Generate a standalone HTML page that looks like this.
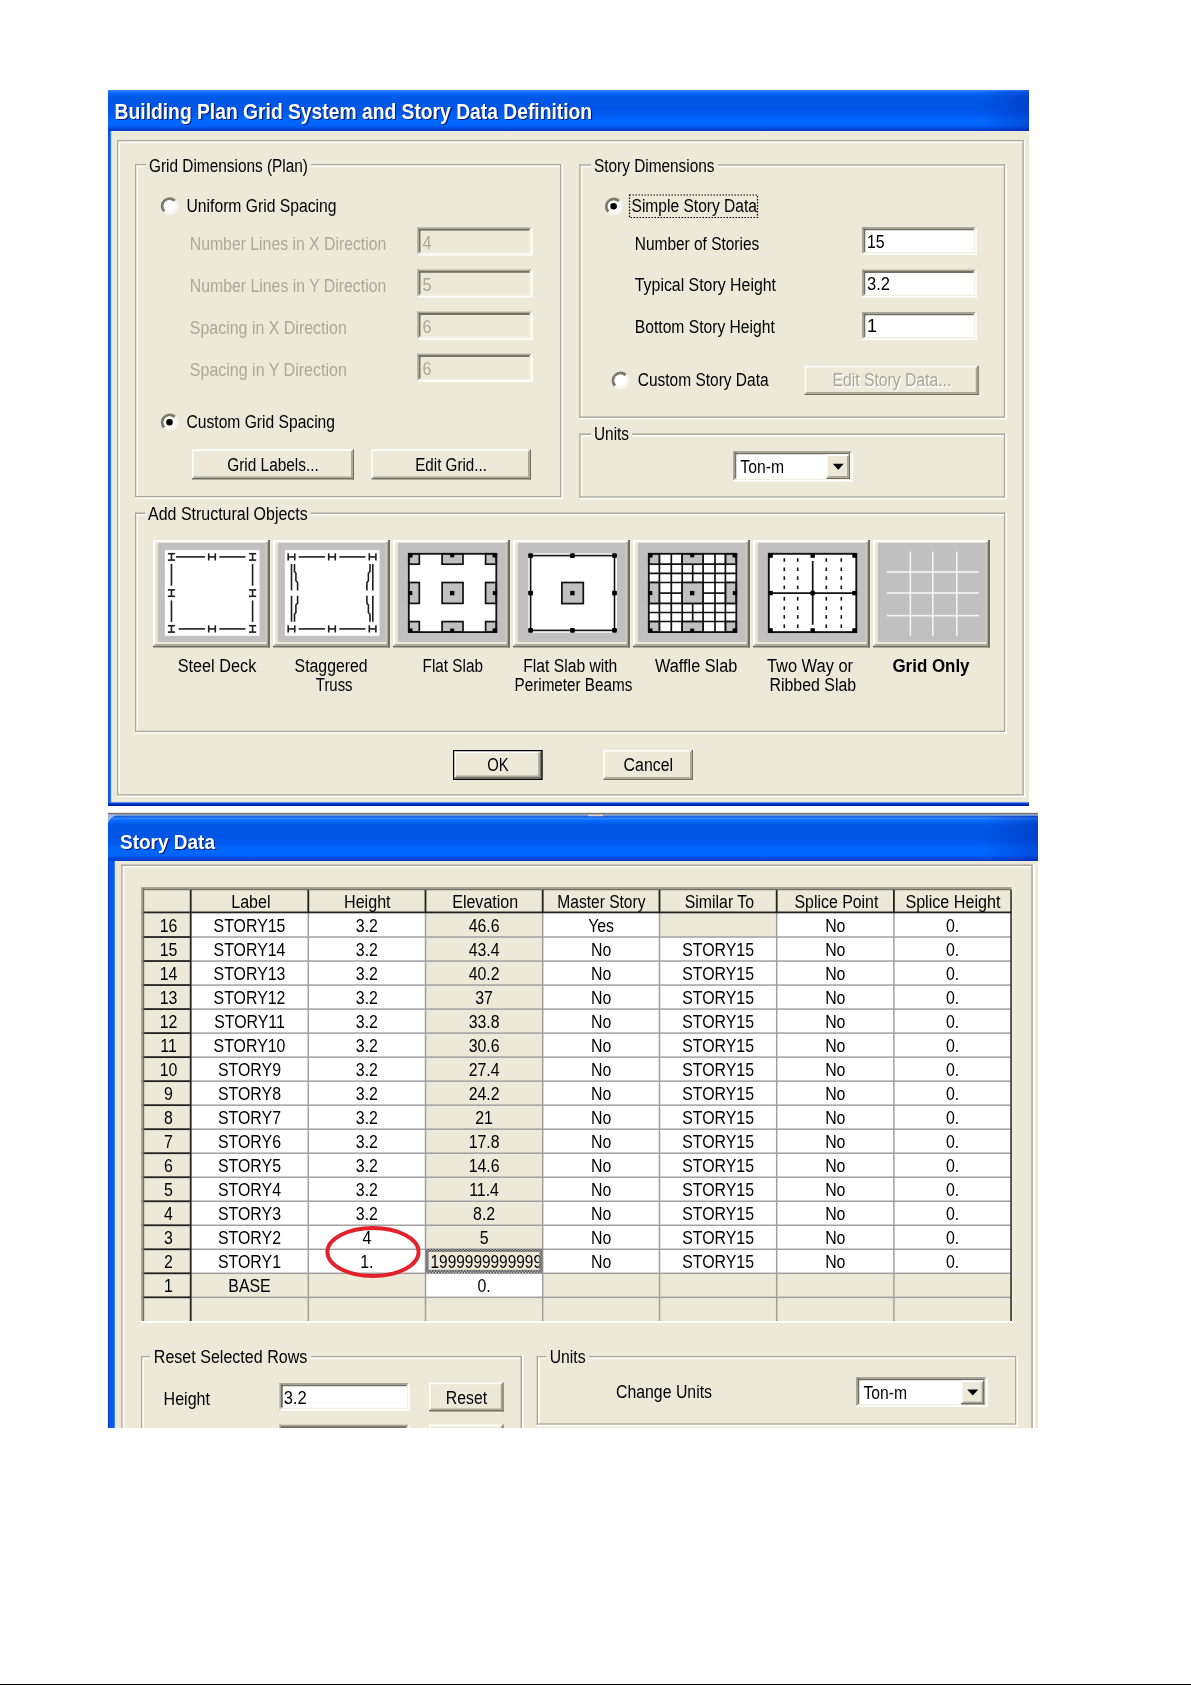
<!DOCTYPE html>
<html><head><meta charset="utf-8"><title>ETABS dialogs</title>
<style>html,body{margin:0;padding:0;background:#fff;width:1191px;height:1685px;overflow:hidden}
svg{display:block;font-family:"Liberation Sans",sans-serif;will-change:transform}</style></head><body>
<svg width="1191" height="1685" viewBox="0 0 1191 1685" font-family="Liberation Sans, sans-serif">
<defs>
<linearGradient id="tb" x1="0" y1="0" x2="0" y2="1">
<stop offset="0" stop-color="#3D95FF"/>
<stop offset="0.05" stop-color="#0A6CFF"/>
<stop offset="0.17" stop-color="#0058E6"/>
<stop offset="0.45" stop-color="#0055E5"/>
<stop offset="0.6" stop-color="#005BF2"/>
<stop offset="0.75" stop-color="#0068FF"/>
<stop offset="0.88" stop-color="#0063FB"/>
<stop offset="0.95" stop-color="#0042D6"/>
<stop offset="1" stop-color="#0040D0"/>
</linearGradient>
<linearGradient id="bb" x1="0" y1="0" x2="0" y2="1">
<stop offset="0" stop-color="#2A6AF5"/>
<stop offset="0.35" stop-color="#0044D8"/>
<stop offset="1" stop-color="#000C8C"/>
</linearGradient>
<linearGradient id="tbr" x1="0" y1="0" x2="1" y2="0">
<stop offset="0" stop-color="#001C9E" stop-opacity="0"/>
<stop offset="1" stop-color="#001C9E" stop-opacity="0.35"/>
</linearGradient>
</defs>
<rect x="0" y="0" width="1191" height="1685" fill="#FFFFFF" />
<rect x="0" y="1684" width="1191" height="1" fill="#000000" />
<rect x="108" y="90" width="921" height="716" fill="#0A55EA" />
<rect x="108" y="802.3" width="921" height="3.6" fill="url(#bb)" />
<rect x="108" y="90" width="921" height="41" fill="url(#tb)" />
<rect x="980" y="90" width="49" height="41" fill="url(#tbr)" />
<rect x="111" y="131" width="918" height="671.3" fill="#ECE9D8" />
<rect x="110.3" y="131" width="0.9" height="671.3" fill="#4F8CF7" />
<text x="115.8" y="120.2" font-size="22" fill="#0A1E7A" text-anchor="start" font-weight="bold" textLength="477.5" lengthAdjust="spacingAndGlyphs" >Building Plan Grid System and Story Data Definition</text>
<text x="114.6" y="119" font-size="22" fill="#FFFFFF" text-anchor="start" font-weight="bold" textLength="477.5" lengthAdjust="spacingAndGlyphs" >Building Plan Grid System and Story Data Definition</text>
<rect x="117" y="140" width="906.9000000000001" height="1.5" fill="#ACA899" />
<rect x="117" y="140" width="1.5" height="655.7" fill="#ACA899" />
<rect x="118.5" y="141.5" width="905.4000000000001" height="1.5" fill="#FFFFFF" />
<rect x="118.5" y="141.5" width="1.5" height="654.2" fill="#FFFFFF" />
<rect x="1022.4000000000001" y="140" width="1.5" height="655.7" fill="#ACA899" />
<rect x="117" y="794.2" width="906.9000000000001" height="1.5" fill="#ACA899" />
<rect x="1023.9000000000001" y="140" width="1.5" height="657.2" fill="#FFFFFF" />
<rect x="117" y="795.7" width="908.4000000000001" height="1.5" fill="#FFFFFF" />
<rect x="135" y="164" width="426.5" height="1.5" fill="#ACA899" />
<rect x="135" y="164" width="1.5" height="333.5" fill="#ACA899" />
<rect x="136.5" y="165.5" width="425" height="1.5" fill="#FFFFFF" />
<rect x="136.5" y="165.5" width="1.5" height="332" fill="#FFFFFF" />
<rect x="560" y="164" width="1.5" height="333.5" fill="#ACA899" />
<rect x="135" y="496" width="426.5" height="1.5" fill="#ACA899" />
<rect x="561.5" y="164" width="1.5" height="335" fill="#FFFFFF" />
<rect x="135" y="497.5" width="428" height="1.5" fill="#FFFFFF" />
<rect x="146" y="162" width="165" height="6" fill="#ECE9D8" />
<text x="149" y="171.5" font-size="18" fill="#000" text-anchor="start" font-weight="normal" textLength="159" lengthAdjust="spacingAndGlyphs" >Grid Dimensions (Plan)</text>
<circle cx="169.5" cy="206" r="9.0" fill="#F7F6F0"/>
<path d="M 163.14 212.36 A 9.0 9.0 0 0 1 175.86 199.64 L 173.67 201.83 A 5.9 5.9 0 0 0 165.33 210.17 Z" fill="#7E7B6F"/>
<circle cx="169.5" cy="206" r="5.9" fill="#FFFFFF"/>
<text x="186.5" y="212" font-size="18" fill="#000" text-anchor="start" font-weight="normal" textLength="150" lengthAdjust="spacingAndGlyphs" >Uniform Grid Spacing</text>
<text x="189.8" y="249.5" font-size="18" fill="#ACA899" text-anchor="start" font-weight="normal" textLength="196.5" lengthAdjust="spacingAndGlyphs" >Number Lines in X Direction</text>
<rect x="417.2" y="227.3" width="115.30000000000001" height="28.0" fill="#FFFFFF" />
<rect x="417.2" y="227.3" width="115.30000000000001" height="1.5" fill="#ACA899" />
<rect x="417.2" y="227.3" width="1.5" height="28.0" fill="#ACA899" />
<rect x="418.7" y="228.8" width="112.30000000000001" height="2" fill="#716F64" />
<rect x="418.7" y="228.8" width="2" height="25.0" fill="#716F64" />
<rect x="531.0" y="227.3" width="1.5" height="28.0" fill="#FFFFFF" />
<rect x="417.2" y="253.8" width="115.30000000000001" height="1.5" fill="#FFFFFF" />
<rect x="529.5" y="228.8" width="1.5" height="25.0" fill="#F1EFE2" />
<rect x="418.7" y="252.3" width="112.30000000000001" height="1.5" fill="#F1EFE2" />
<rect x="420.7" y="230.8" width="108.80000000000001" height="21.5" fill="#ECE9D8" />
<text x="422.5" y="248.5" font-size="18" fill="#ACA899" text-anchor="start" font-weight="normal" textLength="9" lengthAdjust="spacingAndGlyphs" >4</text>
<text x="189.8" y="291.6" font-size="18" fill="#ACA899" text-anchor="start" font-weight="normal" textLength="196.5" lengthAdjust="spacingAndGlyphs" >Number Lines in Y Direction</text>
<rect x="417.2" y="269.40000000000003" width="115.30000000000001" height="28.0" fill="#FFFFFF" />
<rect x="417.2" y="269.40000000000003" width="115.30000000000001" height="1.5" fill="#ACA899" />
<rect x="417.2" y="269.40000000000003" width="1.5" height="28.0" fill="#ACA899" />
<rect x="418.7" y="270.90000000000003" width="112.30000000000001" height="2" fill="#716F64" />
<rect x="418.7" y="270.90000000000003" width="2" height="25.0" fill="#716F64" />
<rect x="531.0" y="269.40000000000003" width="1.5" height="28.0" fill="#FFFFFF" />
<rect x="417.2" y="295.90000000000003" width="115.30000000000001" height="1.5" fill="#FFFFFF" />
<rect x="529.5" y="270.90000000000003" width="1.5" height="25.0" fill="#F1EFE2" />
<rect x="418.7" y="294.40000000000003" width="112.30000000000001" height="1.5" fill="#F1EFE2" />
<rect x="420.7" y="272.90000000000003" width="108.80000000000001" height="21.5" fill="#ECE9D8" />
<text x="422.5" y="290.6" font-size="18" fill="#ACA899" text-anchor="start" font-weight="normal" textLength="9" lengthAdjust="spacingAndGlyphs" >5</text>
<text x="189.8" y="333.7" font-size="18" fill="#ACA899" text-anchor="start" font-weight="normal" textLength="157" lengthAdjust="spacingAndGlyphs" >Spacing in X Direction</text>
<rect x="417.2" y="311.5" width="115.30000000000001" height="28.0" fill="#FFFFFF" />
<rect x="417.2" y="311.5" width="115.30000000000001" height="1.5" fill="#ACA899" />
<rect x="417.2" y="311.5" width="1.5" height="28.0" fill="#ACA899" />
<rect x="418.7" y="313.0" width="112.30000000000001" height="2" fill="#716F64" />
<rect x="418.7" y="313.0" width="2" height="25.0" fill="#716F64" />
<rect x="531.0" y="311.5" width="1.5" height="28.0" fill="#FFFFFF" />
<rect x="417.2" y="338.0" width="115.30000000000001" height="1.5" fill="#FFFFFF" />
<rect x="529.5" y="313.0" width="1.5" height="25.0" fill="#F1EFE2" />
<rect x="418.7" y="336.5" width="112.30000000000001" height="1.5" fill="#F1EFE2" />
<rect x="420.7" y="315.0" width="108.80000000000001" height="21.5" fill="#ECE9D8" />
<text x="422.5" y="332.7" font-size="18" fill="#ACA899" text-anchor="start" font-weight="normal" textLength="9" lengthAdjust="spacingAndGlyphs" >6</text>
<text x="189.8" y="375.8" font-size="18" fill="#ACA899" text-anchor="start" font-weight="normal" textLength="157" lengthAdjust="spacingAndGlyphs" >Spacing in Y Direction</text>
<rect x="417.2" y="353.6" width="115.30000000000001" height="28.0" fill="#FFFFFF" />
<rect x="417.2" y="353.6" width="115.30000000000001" height="1.5" fill="#ACA899" />
<rect x="417.2" y="353.6" width="1.5" height="28.0" fill="#ACA899" />
<rect x="418.7" y="355.1" width="112.30000000000001" height="2" fill="#716F64" />
<rect x="418.7" y="355.1" width="2" height="25.0" fill="#716F64" />
<rect x="531.0" y="353.6" width="1.5" height="28.0" fill="#FFFFFF" />
<rect x="417.2" y="380.1" width="115.30000000000001" height="1.5" fill="#FFFFFF" />
<rect x="529.5" y="355.1" width="1.5" height="25.0" fill="#F1EFE2" />
<rect x="418.7" y="378.6" width="112.30000000000001" height="1.5" fill="#F1EFE2" />
<rect x="420.7" y="357.1" width="108.80000000000001" height="21.5" fill="#ECE9D8" />
<text x="422.5" y="374.8" font-size="18" fill="#ACA899" text-anchor="start" font-weight="normal" textLength="9" lengthAdjust="spacingAndGlyphs" >6</text>
<circle cx="169.5" cy="422.2" r="9.0" fill="#F7F6F0"/>
<path d="M 163.14 428.56 A 9.0 9.0 0 0 1 175.86 415.84 L 173.67 418.03 A 5.9 5.9 0 0 0 165.33 426.37 Z" fill="#7E7B6F"/>
<circle cx="169.5" cy="422.2" r="5.9" fill="#FFFFFF"/>
<circle cx="169.5" cy="422.2" r="3.3" fill="#000"/>
<text x="186.5" y="428" font-size="18" fill="#000" text-anchor="start" font-weight="normal" textLength="148.5" lengthAdjust="spacingAndGlyphs" >Custom Grid Spacing</text>
<rect x="192" y="449.5" width="162" height="30.0" fill="#ECE9D8" />
<rect x="192" y="449.5" width="162" height="1.5" fill="#FFFFFF" />
<rect x="192" y="449.5" width="1.5" height="30.0" fill="#FFFFFF" />
<rect x="352.5" y="449.5" width="1.5" height="30.0" fill="#716F64" />
<rect x="192" y="478.0" width="162" height="1.5" fill="#716F64" />
<rect x="351" y="451.0" width="1.5" height="27.0" fill="#ACA899" />
<rect x="193.5" y="476.5" width="159" height="1.5" fill="#ACA899" />
<text x="227.2" y="471" font-size="18" fill="#000" text-anchor="start" font-weight="normal" textLength="91.6" lengthAdjust="spacingAndGlyphs" >Grid Labels...</text>
<rect x="371.5" y="449.5" width="159.5" height="30.0" fill="#ECE9D8" />
<rect x="371.5" y="449.5" width="159.5" height="1.5" fill="#FFFFFF" />
<rect x="371.5" y="449.5" width="1.5" height="30.0" fill="#FFFFFF" />
<rect x="529.5" y="449.5" width="1.5" height="30.0" fill="#716F64" />
<rect x="371.5" y="478.0" width="159.5" height="1.5" fill="#716F64" />
<rect x="528" y="451.0" width="1.5" height="27.0" fill="#ACA899" />
<rect x="373.0" y="476.5" width="156.5" height="1.5" fill="#ACA899" />
<text x="415.2" y="471" font-size="18" fill="#000" text-anchor="start" font-weight="normal" textLength="71.8" lengthAdjust="spacingAndGlyphs" >Edit Grid...</text>
<rect x="579.3" y="164.3" width="426.0" height="1.5" fill="#ACA899" />
<rect x="579.3" y="164.3" width="1.5" height="253.59999999999997" fill="#ACA899" />
<rect x="580.8" y="165.8" width="424.5" height="1.5" fill="#FFFFFF" />
<rect x="580.8" y="165.8" width="1.5" height="252.09999999999997" fill="#FFFFFF" />
<rect x="1003.8" y="164.3" width="1.5" height="253.59999999999997" fill="#ACA899" />
<rect x="579.3" y="416.4" width="426.0" height="1.5" fill="#ACA899" />
<rect x="1005.3" y="164.3" width="1.5" height="255.09999999999997" fill="#FFFFFF" />
<rect x="579.3" y="417.9" width="427.5" height="1.5" fill="#FFFFFF" />
<rect x="591" y="162.3" width="126.5" height="6" fill="#ECE9D8" />
<text x="594" y="171.5" font-size="18" fill="#000" text-anchor="start" font-weight="normal" textLength="120.5" lengthAdjust="spacingAndGlyphs" >Story Dimensions</text>
<circle cx="613.6" cy="206.3" r="9.0" fill="#F7F6F0"/>
<path d="M 607.24 212.66 A 9.0 9.0 0 0 1 619.96 199.94 L 617.77 202.13 A 5.9 5.9 0 0 0 609.43 210.47 Z" fill="#7E7B6F"/>
<circle cx="613.6" cy="206.3" r="5.9" fill="#FFFFFF"/>
<circle cx="613.6" cy="206.3" r="3.3" fill="#000"/>
<text x="631.5" y="211.6" font-size="18" fill="#000" text-anchor="start" font-weight="normal" textLength="125.5" lengthAdjust="spacingAndGlyphs" >Simple Story Data</text>
<rect x="629.5" y="195" width="128" height="22.5" fill="none" stroke="#000" stroke-width="1.2" stroke-dasharray="1.5 1.5"/>
<text x="634.8" y="249.5" font-size="18" fill="#000" text-anchor="start" font-weight="normal" textLength="124.4" lengthAdjust="spacingAndGlyphs" >Number of Stories</text>
<rect x="862" y="227.0" width="114.70000000000005" height="28.0" fill="#FFFFFF" />
<rect x="862" y="227.0" width="114.70000000000005" height="1.5" fill="#ACA899" />
<rect x="862" y="227.0" width="1.5" height="28.0" fill="#ACA899" />
<rect x="863.5" y="228.5" width="111.70000000000005" height="2" fill="#716F64" />
<rect x="863.5" y="228.5" width="2" height="25.0" fill="#716F64" />
<rect x="975.2" y="227.0" width="1.5" height="28.0" fill="#FFFFFF" />
<rect x="862" y="253.5" width="114.70000000000005" height="1.5" fill="#FFFFFF" />
<rect x="973.7" y="228.5" width="1.5" height="25.0" fill="#F1EFE2" />
<rect x="863.5" y="252.0" width="111.70000000000005" height="1.5" fill="#F1EFE2" />
<rect x="865.5" y="230.5" width="108.20000000000005" height="21.5" fill="#FFFFFF" />
<text x="867" y="247.9" font-size="18" fill="#000" text-anchor="start" font-weight="normal" textLength="17.7" lengthAdjust="spacingAndGlyphs" >15</text>
<text x="634.8" y="291.3" font-size="18" fill="#000" text-anchor="start" font-weight="normal" textLength="141.2" lengthAdjust="spacingAndGlyphs" >Typical Story Height</text>
<rect x="862" y="269.5" width="114.70000000000005" height="28.0" fill="#FFFFFF" />
<rect x="862" y="269.5" width="114.70000000000005" height="1.5" fill="#ACA899" />
<rect x="862" y="269.5" width="1.5" height="28.0" fill="#ACA899" />
<rect x="863.5" y="271.0" width="111.70000000000005" height="2" fill="#716F64" />
<rect x="863.5" y="271.0" width="2" height="25.0" fill="#716F64" />
<rect x="975.2" y="269.5" width="1.5" height="28.0" fill="#FFFFFF" />
<rect x="862" y="296.0" width="114.70000000000005" height="1.5" fill="#FFFFFF" />
<rect x="973.7" y="271.0" width="1.5" height="25.0" fill="#F1EFE2" />
<rect x="863.5" y="294.5" width="111.70000000000005" height="1.5" fill="#F1EFE2" />
<rect x="865.5" y="273.0" width="108.20000000000005" height="21.5" fill="#FFFFFF" />
<text x="867" y="289.7" font-size="18" fill="#000" text-anchor="start" font-weight="normal" textLength="23" lengthAdjust="spacingAndGlyphs" >3.2</text>
<text x="634.8" y="333.1" font-size="18" fill="#000" text-anchor="start" font-weight="normal" textLength="140" lengthAdjust="spacingAndGlyphs" >Bottom Story Height</text>
<rect x="862" y="312.0" width="114.70000000000005" height="28.0" fill="#FFFFFF" />
<rect x="862" y="312.0" width="114.70000000000005" height="1.5" fill="#ACA899" />
<rect x="862" y="312.0" width="1.5" height="28.0" fill="#ACA899" />
<rect x="863.5" y="313.5" width="111.70000000000005" height="2" fill="#716F64" />
<rect x="863.5" y="313.5" width="2" height="25.0" fill="#716F64" />
<rect x="975.2" y="312.0" width="1.5" height="28.0" fill="#FFFFFF" />
<rect x="862" y="338.5" width="114.70000000000005" height="1.5" fill="#FFFFFF" />
<rect x="973.7" y="313.5" width="1.5" height="25.0" fill="#F1EFE2" />
<rect x="863.5" y="337.0" width="111.70000000000005" height="1.5" fill="#F1EFE2" />
<rect x="865.5" y="315.5" width="108.20000000000005" height="21.5" fill="#FFFFFF" />
<text x="867" y="331.5" font-size="18" fill="#000" text-anchor="start" font-weight="normal" >1</text>
<circle cx="620.3" cy="380.3" r="9.0" fill="#F7F6F0"/>
<path d="M 613.94 386.66 A 9.0 9.0 0 0 1 626.66 373.94 L 624.47 376.13 A 5.9 5.9 0 0 0 616.13 384.47 Z" fill="#7E7B6F"/>
<circle cx="620.3" cy="380.3" r="5.9" fill="#FFFFFF"/>
<text x="637.7" y="386.2" font-size="18" fill="#000" text-anchor="start" font-weight="normal" textLength="130.9" lengthAdjust="spacingAndGlyphs" >Custom Story Data</text>
<rect x="804.6" y="365.8" width="174.19999999999993" height="29.19999999999999" fill="#ECE9D8" />
<rect x="804.6" y="365.8" width="174.19999999999993" height="1.5" fill="#FFFFFF" />
<rect x="804.6" y="365.8" width="1.5" height="29.19999999999999" fill="#FFFFFF" />
<rect x="977.3" y="365.8" width="1.5" height="29.19999999999999" fill="#716F64" />
<rect x="804.6" y="393.5" width="174.19999999999993" height="1.5" fill="#716F64" />
<rect x="975.8" y="367.3" width="1.5" height="26.19999999999999" fill="#ACA899" />
<rect x="806.1" y="392" width="171.19999999999993" height="1.5" fill="#ACA899" />
<text x="833.8" y="387.5" font-size="18" fill="#FFFFFF" text-anchor="start" font-weight="normal" textLength="118.8" lengthAdjust="spacingAndGlyphs" >Edit Story Data...</text>
<text x="832.5" y="386.2" font-size="18" fill="#ACA899" text-anchor="start" font-weight="normal" textLength="118.8" lengthAdjust="spacingAndGlyphs" >Edit Story Data...</text>
<rect x="579.3" y="433.5" width="426.0" height="1.5" fill="#ACA899" />
<rect x="579.3" y="433.5" width="1.5" height="64.30000000000001" fill="#ACA899" />
<rect x="580.8" y="435.0" width="424.5" height="1.5" fill="#FFFFFF" />
<rect x="580.8" y="435.0" width="1.5" height="62.80000000000001" fill="#FFFFFF" />
<rect x="1003.8" y="433.5" width="1.5" height="64.30000000000001" fill="#ACA899" />
<rect x="579.3" y="496.3" width="426.0" height="1.5" fill="#ACA899" />
<rect x="1005.3" y="433.5" width="1.5" height="65.80000000000001" fill="#FFFFFF" />
<rect x="579.3" y="497.8" width="427.5" height="1.5" fill="#FFFFFF" />
<rect x="591" y="431.5" width="41" height="6" fill="#ECE9D8" />
<text x="594" y="440" font-size="18" fill="#000" text-anchor="start" font-weight="normal" textLength="35" lengthAdjust="spacingAndGlyphs" >Units</text>
<rect x="733" y="451" width="120" height="30.5" fill="#FFFFFF" />
<rect x="733" y="451" width="120" height="1.5" fill="#ACA899" />
<rect x="733" y="451" width="1.5" height="30.5" fill="#ACA899" />
<rect x="734.5" y="452.5" width="117" height="2" fill="#716F64" />
<rect x="734.5" y="452.5" width="2" height="27.5" fill="#716F64" />
<rect x="851.5" y="451" width="1.5" height="30.5" fill="#FFFFFF" />
<rect x="733" y="480.0" width="120" height="1.5" fill="#FFFFFF" />
<rect x="850" y="452.5" width="1.5" height="27.5" fill="#F1EFE2" />
<rect x="734.5" y="478.5" width="117" height="1.5" fill="#F1EFE2" />
<rect x="736.5" y="454.5" width="113.5" height="24.0" fill="#FFFFFF" />
<rect x="826.5" y="454.5" width="23.5" height="24.5" fill="#ECE9D8" />
<rect x="826.5" y="454.5" width="23.5" height="1.5" fill="#FFFFFF" />
<rect x="826.5" y="454.5" width="1.5" height="24.5" fill="#FFFFFF" />
<rect x="848.5" y="454.5" width="1.5" height="24.5" fill="#716F64" />
<rect x="826.5" y="477.5" width="23.5" height="1.5" fill="#716F64" />
<rect x="847" y="456.0" width="1.5" height="21.5" fill="#ACA899" />
<rect x="828.0" y="476.0" width="20.5" height="1.5" fill="#ACA899" />
<path d="M 832.75 463.75 L 843.75 463.75 L 838.25 469.75 Z" fill="#000"/>
<text x="740.3" y="473.2" font-size="18" fill="#000" text-anchor="start" font-weight="normal" textLength="43.7" lengthAdjust="spacingAndGlyphs" >Ton-m</text>
<rect x="135" y="512.5" width="870.4" height="1.5" fill="#ACA899" />
<rect x="135" y="512.5" width="1.5" height="219.70000000000005" fill="#ACA899" />
<rect x="136.5" y="514.0" width="868.9" height="1.5" fill="#FFFFFF" />
<rect x="136.5" y="514.0" width="1.5" height="218.20000000000005" fill="#FFFFFF" />
<rect x="1003.9" y="512.5" width="1.5" height="219.70000000000005" fill="#ACA899" />
<rect x="135" y="730.7" width="870.4" height="1.5" fill="#ACA899" />
<rect x="1005.4" y="512.5" width="1.5" height="221.20000000000005" fill="#FFFFFF" />
<rect x="135" y="732.2" width="871.9" height="1.5" fill="#FFFFFF" />
<rect x="145.1" y="510.5" width="165.6" height="6" fill="#ECE9D8" />
<text x="148.1" y="519.8" font-size="18" fill="#000" text-anchor="start" font-weight="normal" textLength="159.6" lengthAdjust="spacingAndGlyphs" >Add Structural Objects</text>
<rect x="153" y="540" width="117" height="107.5" fill="#ECE9D8" />
<rect x="153" y="540" width="117" height="1.8" fill="#FFFFFF" />
<rect x="153" y="540" width="1.8" height="107.5" fill="#FFFFFF" />
<rect x="268" y="540" width="2" height="107.5" fill="#716F64" />
<rect x="153" y="645.5" width="117" height="2" fill="#716F64" />
<rect x="266.5" y="541.8" width="1.5" height="103.7" fill="#ACA899" />
<rect x="154.8" y="644.0" width="113.2" height="1.5" fill="#ACA899" />
<rect x="157.8" y="543" width="108" height="99" fill="#C0C0C0" />
<rect x="164.9" y="550.1" width="94.6" height="85.7" fill="#FFFFFF" />
<path d="M 167.86 553.70 L 175.06 553.70" fill="none" stroke="#1E1E1E" stroke-width="1.6" />
<path d="M 167.86 560.10 L 175.06 560.10" fill="none" stroke="#1E1E1E" stroke-width="1.6" />
<path d="M 171.46 553.70 L 171.46 560.10" fill="none" stroke="#1E1E1E" stroke-width="1.6" />
<path d="M 167.86 589.90 L 175.06 589.90" fill="none" stroke="#1E1E1E" stroke-width="1.6" />
<path d="M 167.86 596.30 L 175.06 596.30" fill="none" stroke="#1E1E1E" stroke-width="1.6" />
<path d="M 171.46 589.90 L 171.46 596.30" fill="none" stroke="#1E1E1E" stroke-width="1.6" />
<path d="M 167.86 625.70 L 175.06 625.70" fill="none" stroke="#1E1E1E" stroke-width="1.6" />
<path d="M 167.86 632.10 L 175.06 632.10" fill="none" stroke="#1E1E1E" stroke-width="1.6" />
<path d="M 171.46 625.70 L 171.46 632.10" fill="none" stroke="#1E1E1E" stroke-width="1.6" />
<path d="M 249.00 553.70 L 256.20 553.70" fill="none" stroke="#1E1E1E" stroke-width="1.6" />
<path d="M 249.00 560.10 L 256.20 560.10" fill="none" stroke="#1E1E1E" stroke-width="1.6" />
<path d="M 252.60 553.70 L 252.60 560.10" fill="none" stroke="#1E1E1E" stroke-width="1.6" />
<path d="M 249.00 589.90 L 256.20 589.90" fill="none" stroke="#1E1E1E" stroke-width="1.6" />
<path d="M 249.00 596.30 L 256.20 596.30" fill="none" stroke="#1E1E1E" stroke-width="1.6" />
<path d="M 252.60 589.90 L 252.60 596.30" fill="none" stroke="#1E1E1E" stroke-width="1.6" />
<path d="M 249.00 625.70 L 256.20 625.70" fill="none" stroke="#1E1E1E" stroke-width="1.6" />
<path d="M 249.00 632.10 L 256.20 632.10" fill="none" stroke="#1E1E1E" stroke-width="1.6" />
<path d="M 252.60 625.70 L 252.60 632.10" fill="none" stroke="#1E1E1E" stroke-width="1.6" />
<path d="M 208.70 553.30 L 208.70 560.50" fill="none" stroke="#1E1E1E" stroke-width="1.6" />
<path d="M 215.30 553.30 L 215.30 560.50" fill="none" stroke="#1E1E1E" stroke-width="1.6" />
<path d="M 208.70 556.90 L 215.30 556.90" fill="none" stroke="#1E1E1E" stroke-width="1.6" />
<path d="M 208.70 625.30 L 208.70 632.50" fill="none" stroke="#1E1E1E" stroke-width="1.6" />
<path d="M 215.30 625.30 L 215.30 632.50" fill="none" stroke="#1E1E1E" stroke-width="1.6" />
<path d="M 208.70 628.90 L 215.30 628.90" fill="none" stroke="#1E1E1E" stroke-width="1.6" />
<path d="M 175.90 556.90 L 205.00 556.90" fill="none" stroke="#1E1E1E" stroke-width="1.6" />
<path d="M 219.30 556.90 L 245.50 556.90" fill="none" stroke="#1E1E1E" stroke-width="1.6" />
<path d="M 178.70 628.90 L 205.00 628.90" fill="none" stroke="#1E1E1E" stroke-width="1.6" />
<path d="M 219.30 628.90 L 245.50 628.90" fill="none" stroke="#1E1E1E" stroke-width="1.6" />
<path d="M 171.46 564.00 L 171.46 585.70" fill="none" stroke="#1E1E1E" stroke-width="1.6" />
<path d="M 171.46 600.40 L 171.46 621.90" fill="none" stroke="#1E1E1E" stroke-width="1.6" />
<path d="M 252.60 564.00 L 252.60 585.70" fill="none" stroke="#1E1E1E" stroke-width="1.6" />
<path d="M 252.60 600.40 L 252.60 621.90" fill="none" stroke="#1E1E1E" stroke-width="1.6" />
<rect x="273" y="540" width="117" height="107.5" fill="#ECE9D8" />
<rect x="273" y="540" width="117" height="1.8" fill="#FFFFFF" />
<rect x="273" y="540" width="1.8" height="107.5" fill="#FFFFFF" />
<rect x="388" y="540" width="2" height="107.5" fill="#716F64" />
<rect x="273" y="645.5" width="117" height="2" fill="#716F64" />
<rect x="386.5" y="541.8" width="1.5" height="103.7" fill="#ACA899" />
<rect x="274.8" y="644.0" width="113.2" height="1.5" fill="#ACA899" />
<rect x="277.8" y="543" width="108" height="99" fill="#C0C0C0" />
<rect x="284.9" y="550.1" width="94.6" height="85.7" fill="#FFFFFF" />
<path d="M 288.16 553.30 L 288.16 560.50" fill="none" stroke="#1E1E1E" stroke-width="1.6" />
<path d="M 294.76 553.30 L 294.76 560.50" fill="none" stroke="#1E1E1E" stroke-width="1.6" />
<path d="M 288.16 556.90 L 294.76 556.90" fill="none" stroke="#1E1E1E" stroke-width="1.6" />
<path d="M 288.16 625.30 L 288.16 632.50" fill="none" stroke="#1E1E1E" stroke-width="1.6" />
<path d="M 294.76 625.30 L 294.76 632.50" fill="none" stroke="#1E1E1E" stroke-width="1.6" />
<path d="M 288.16 628.90 L 294.76 628.90" fill="none" stroke="#1E1E1E" stroke-width="1.6" />
<path d="M 328.70 553.30 L 328.70 560.50" fill="none" stroke="#1E1E1E" stroke-width="1.6" />
<path d="M 335.30 553.30 L 335.30 560.50" fill="none" stroke="#1E1E1E" stroke-width="1.6" />
<path d="M 328.70 556.90 L 335.30 556.90" fill="none" stroke="#1E1E1E" stroke-width="1.6" />
<path d="M 328.70 625.30 L 328.70 632.50" fill="none" stroke="#1E1E1E" stroke-width="1.6" />
<path d="M 335.30 625.30 L 335.30 632.50" fill="none" stroke="#1E1E1E" stroke-width="1.6" />
<path d="M 328.70 628.90 L 335.30 628.90" fill="none" stroke="#1E1E1E" stroke-width="1.6" />
<path d="M 369.30 553.30 L 369.30 560.50" fill="none" stroke="#1E1E1E" stroke-width="1.6" />
<path d="M 375.90 553.30 L 375.90 560.50" fill="none" stroke="#1E1E1E" stroke-width="1.6" />
<path d="M 369.30 556.90 L 375.90 556.90" fill="none" stroke="#1E1E1E" stroke-width="1.6" />
<path d="M 369.30 625.30 L 369.30 632.50" fill="none" stroke="#1E1E1E" stroke-width="1.6" />
<path d="M 375.90 625.30 L 375.90 632.50" fill="none" stroke="#1E1E1E" stroke-width="1.6" />
<path d="M 369.30 628.90 L 375.90 628.90" fill="none" stroke="#1E1E1E" stroke-width="1.6" />
<path d="M 298.70 556.90 L 325.00 556.90" fill="none" stroke="#1E1E1E" stroke-width="1.6" />
<path d="M 339.30 556.90 L 365.50 556.90" fill="none" stroke="#1E1E1E" stroke-width="1.6" />
<path d="M 298.70 628.90 L 325.00 628.90" fill="none" stroke="#1E1E1E" stroke-width="1.6" />
<path d="M 339.30 628.90 L 365.50 628.90" fill="none" stroke="#1E1E1E" stroke-width="1.6" />
<path d="M 291.50 564.00 L 291.50 590.40" fill="none" stroke="#1E1E1E" stroke-width="1.6" />
<path d="M 291.50 595.70 L 291.50 621.70" fill="none" stroke="#1E1E1E" stroke-width="1.6" />
<path d="M 294.50 564.00 L 294.50 571.50 L 295.90 573.20 L 295.90 580.70 L 297.60 582.50 L 297.60 590.40" fill="none" stroke="#1E1E1E" stroke-width="1.6" />
<path d="M 297.60 595.70 L 297.60 603.20 L 295.90 605.00 L 295.90 612.50 L 294.50 614.20 L 294.50 621.70" fill="none" stroke="#1E1E1E" stroke-width="1.6" />
<path d="M 372.80 564.00 L 372.80 590.40" fill="none" stroke="#1E1E1E" stroke-width="1.6" />
<path d="M 372.80 595.70 L 372.80 621.70" fill="none" stroke="#1E1E1E" stroke-width="1.6" />
<path d="M 370.00 564.00 L 370.00 571.50 L 368.40 573.20 L 368.40 580.70 L 366.90 582.50 L 366.90 590.40" fill="none" stroke="#1E1E1E" stroke-width="1.6" />
<path d="M 366.90 595.70 L 366.90 603.20 L 368.40 605.00 L 368.40 612.50 L 370.00 614.20 L 370.00 621.70" fill="none" stroke="#1E1E1E" stroke-width="1.6" />
<rect x="393" y="540" width="117" height="107.5" fill="#ECE9D8" />
<rect x="393" y="540" width="117" height="1.8" fill="#FFFFFF" />
<rect x="393" y="540" width="1.8" height="107.5" fill="#FFFFFF" />
<rect x="508" y="540" width="2" height="107.5" fill="#716F64" />
<rect x="393" y="645.5" width="117" height="2" fill="#716F64" />
<rect x="506.5" y="541.8" width="1.5" height="103.7" fill="#ACA899" />
<rect x="394.8" y="644.0" width="113.2" height="1.5" fill="#ACA899" />
<rect x="397.8" y="543" width="108" height="99" fill="#C0C0C0" />
<rect x="408.8" y="553.8" width="87.5" height="78.3" fill="#FFFFFF" />
<rect x="408.80" y="553.80" width="10.50" height="10.40" fill="#C0C0C0" stroke="#111" stroke-width="1.7"/>
<rect x="442.10" y="553.80" width="20.90" height="10.40" fill="#C0C0C0" stroke="#111" stroke-width="1.7"/>
<rect x="485.60" y="553.80" width="10.70" height="10.40" fill="#C0C0C0" stroke="#111" stroke-width="1.7"/>
<rect x="408.80" y="582.50" width="10.50" height="20.90" fill="#C0C0C0" stroke="#111" stroke-width="1.7"/>
<rect x="442.10" y="582.50" width="20.90" height="20.90" fill="#C0C0C0" stroke="#111" stroke-width="1.7"/>
<rect x="485.60" y="582.50" width="10.70" height="20.90" fill="#C0C0C0" stroke="#111" stroke-width="1.7"/>
<rect x="408.80" y="621.60" width="10.50" height="10.50" fill="#C0C0C0" stroke="#111" stroke-width="1.7"/>
<rect x="442.10" y="621.60" width="20.90" height="10.50" fill="#C0C0C0" stroke="#111" stroke-width="1.7"/>
<rect x="485.60" y="621.60" width="10.70" height="10.50" fill="#C0C0C0" stroke="#111" stroke-width="1.7"/>
<rect x="408.80" y="553.80" width="87.5" height="78.3" fill="none" stroke="#111" stroke-width="1.8"/>
<rect x="450.0" y="590.9" width="4.4" height="4.4" fill="#000" />
<rect x="408.5" y="553.5" width="4" height="4" fill="#000" />
<rect x="450.2" y="553.3" width="4" height="4" fill="#000" />
<rect x="492.6" y="553.5" width="4" height="4" fill="#000" />
<rect x="408.3" y="591.1" width="4" height="4" fill="#000" />
<rect x="492.8" y="591.1" width="4" height="4" fill="#000" />
<rect x="408.5" y="628.4" width="4" height="4" fill="#000" />
<rect x="450.2" y="628.6" width="4" height="4" fill="#000" />
<rect x="492.6" y="628.4" width="4" height="4" fill="#000" />
<rect x="513" y="540" width="117" height="107.5" fill="#ECE9D8" />
<rect x="513" y="540" width="117" height="1.8" fill="#FFFFFF" />
<rect x="513" y="540" width="1.8" height="107.5" fill="#FFFFFF" />
<rect x="628" y="540" width="2" height="107.5" fill="#716F64" />
<rect x="513" y="645.5" width="117" height="2" fill="#716F64" />
<rect x="626.5" y="541.8" width="1.5" height="103.7" fill="#ACA899" />
<rect x="514.8" y="644.0" width="113.2" height="1.5" fill="#ACA899" />
<rect x="517.8" y="543" width="108" height="99" fill="#C0C0C0" />
<rect x="528.4" y="553.4" width="88.6" height="79.3" fill="#FFFFFF" />
<rect x="530.60" y="555.60" width="83.9" height="74.8" fill="none" stroke="#111" stroke-width="1.6"/>
<rect x="561.90" y="582.50" width="21.4" height="21.1" fill="#C0C0C0" stroke="#111" stroke-width="1.7"/>
<rect x="570.1999999999999" y="590.9" width="4.4" height="4.4" fill="#000" />
<rect x="528.20" y="553.20" width="4.8" height="4.8" rx="1" fill="#000"/>
<rect x="570.00" y="553.20" width="4.8" height="4.8" rx="1" fill="#000"/>
<rect x="612.10" y="553.20" width="4.8" height="4.8" rx="1" fill="#000"/>
<rect x="528.20" y="590.70" width="4.8" height="4.8" rx="1" fill="#000"/>
<rect x="612.10" y="590.70" width="4.8" height="4.8" rx="1" fill="#000"/>
<rect x="528.20" y="628.00" width="4.8" height="4.8" rx="1" fill="#000"/>
<rect x="570.00" y="628.00" width="4.8" height="4.8" rx="1" fill="#000"/>
<rect x="612.10" y="628.00" width="4.8" height="4.8" rx="1" fill="#000"/>
<rect x="633" y="540" width="117" height="107.5" fill="#ECE9D8" />
<rect x="633" y="540" width="117" height="1.8" fill="#FFFFFF" />
<rect x="633" y="540" width="1.8" height="107.5" fill="#FFFFFF" />
<rect x="748" y="540" width="2" height="107.5" fill="#716F64" />
<rect x="633" y="645.5" width="117" height="2" fill="#716F64" />
<rect x="746.5" y="541.8" width="1.5" height="103.7" fill="#ACA899" />
<rect x="634.8" y="644.0" width="113.2" height="1.5" fill="#ACA899" />
<rect x="637.8" y="543" width="108" height="99" fill="#C0C0C0" />
<rect x="648.8" y="553.8" width="87.5" height="78.3" fill="#FFFFFF" />
<path d="M 659.40 553.80 L 659.40 632.10" fill="none" stroke="#111" stroke-width="1.7" />
<path d="M 671.30 553.80 L 671.30 632.10" fill="none" stroke="#111" stroke-width="1.7" />
<path d="M 682.20 553.80 L 682.20 632.10" fill="none" stroke="#111" stroke-width="1.7" />
<path d="M 692.70 564.20 L 692.70 582.50" fill="none" stroke="#111" stroke-width="1.7" />
<path d="M 692.70 603.40 L 692.70 621.50" fill="none" stroke="#111" stroke-width="1.7" />
<path d="M 703.10 553.80 L 703.10 632.10" fill="none" stroke="#111" stroke-width="1.7" />
<path d="M 715.00 553.80 L 715.00 632.10" fill="none" stroke="#111" stroke-width="1.7" />
<path d="M 725.40 553.80 L 725.40 632.10" fill="none" stroke="#111" stroke-width="1.7" />
<path d="M 648.80 564.20 L 736.30 564.20" fill="none" stroke="#111" stroke-width="1.7" />
<path d="M 648.80 573.40 L 736.30 573.40" fill="none" stroke="#111" stroke-width="1.7" />
<path d="M 648.80 582.50 L 736.30 582.50" fill="none" stroke="#111" stroke-width="1.7" />
<path d="M 659.40 593.10 L 682.20 593.10" fill="none" stroke="#111" stroke-width="1.7" />
<path d="M 703.10 593.10 L 725.40 593.10" fill="none" stroke="#111" stroke-width="1.7" />
<path d="M 648.80 603.40 L 736.30 603.40" fill="none" stroke="#111" stroke-width="1.7" />
<path d="M 648.80 612.50 L 736.30 612.50" fill="none" stroke="#111" stroke-width="1.7" />
<path d="M 648.80 621.50 L 736.30 621.50" fill="none" stroke="#111" stroke-width="1.7" />
<rect x="648.8" y="553.8" width="10.5" height="10.399999999999999" fill="#C0C0C0" />
<rect x="682.1" y="553.8" width="20.9" height="10.399999999999999" fill="#C0C0C0" />
<rect x="725.6" y="553.8" width="10.700000000000003" height="10.399999999999999" fill="#C0C0C0" />
<rect x="648.8" y="582.5" width="10.5" height="20.9" fill="#C0C0C0" />
<rect x="682.1" y="582.5" width="20.9" height="20.9" fill="#C0C0C0" />
<rect x="725.6" y="582.5" width="10.700000000000003" height="20.9" fill="#C0C0C0" />
<rect x="648.8" y="621.6" width="10.5" height="10.5" fill="#C0C0C0" />
<rect x="682.1" y="621.6" width="20.9" height="10.5" fill="#C0C0C0" />
<rect x="725.6" y="621.6" width="10.700000000000003" height="10.5" fill="#C0C0C0" />
<rect x="648.80" y="553.80" width="10.50" height="10.40" fill="none" stroke="#111" stroke-width="1.7"/>
<rect x="682.10" y="553.80" width="20.90" height="10.40" fill="none" stroke="#111" stroke-width="1.7"/>
<rect x="725.60" y="553.80" width="10.70" height="10.40" fill="none" stroke="#111" stroke-width="1.7"/>
<rect x="648.80" y="582.50" width="10.50" height="20.90" fill="none" stroke="#111" stroke-width="1.7"/>
<rect x="682.10" y="582.50" width="20.90" height="20.90" fill="none" stroke="#111" stroke-width="1.7"/>
<rect x="725.60" y="582.50" width="10.70" height="20.90" fill="none" stroke="#111" stroke-width="1.7"/>
<rect x="648.80" y="621.60" width="10.50" height="10.50" fill="none" stroke="#111" stroke-width="1.7"/>
<rect x="682.10" y="621.60" width="20.90" height="10.50" fill="none" stroke="#111" stroke-width="1.7"/>
<rect x="725.60" y="621.60" width="10.70" height="10.50" fill="none" stroke="#111" stroke-width="1.7"/>
<rect x="648.80" y="553.80" width="87.5" height="78.3" fill="none" stroke="#111" stroke-width="1.8"/>
<rect x="690.0" y="590.9" width="4.4" height="4.4" fill="#000" />
<rect x="648.5" y="553.5" width="4" height="4" fill="#000" />
<rect x="690.2" y="553.3" width="4" height="4" fill="#000" />
<rect x="732.6" y="553.5" width="4" height="4" fill="#000" />
<rect x="648.3" y="591.1" width="4" height="4" fill="#000" />
<rect x="732.8" y="591.1" width="4" height="4" fill="#000" />
<rect x="648.5" y="628.4" width="4" height="4" fill="#000" />
<rect x="690.2" y="628.6" width="4" height="4" fill="#000" />
<rect x="732.6" y="628.4" width="4" height="4" fill="#000" />
<rect x="753" y="540" width="117" height="107.5" fill="#ECE9D8" />
<rect x="753" y="540" width="117" height="1.8" fill="#FFFFFF" />
<rect x="753" y="540" width="1.8" height="107.5" fill="#FFFFFF" />
<rect x="868" y="540" width="2" height="107.5" fill="#716F64" />
<rect x="753" y="645.5" width="117" height="2" fill="#716F64" />
<rect x="866.5" y="541.8" width="1.5" height="103.7" fill="#ACA899" />
<rect x="754.8" y="644.0" width="113.2" height="1.5" fill="#ACA899" />
<rect x="757.8" y="543" width="108" height="99" fill="#C0C0C0" />
<rect x="768.8" y="553.8" width="87.5" height="78.3" fill="#FFFFFF" />
<rect x="768.80" y="553.80" width="87.5" height="78.3" fill="none" stroke="#111" stroke-width="1.9"/>
<path d="M 768.80 593.10 L 856.30 593.10" fill="none" stroke="#111" stroke-width="1.7" />
<path d="M 812.70 560.90 L 812.70 624.80" fill="none" stroke="#111" stroke-width="1.7" />
<path d="M 784.30 558.20 L 784.30 561.80" fill="none" stroke="#111" stroke-width="1.6" />
<path d="M 784.30 567.50 L 784.30 571.10" fill="none" stroke="#111" stroke-width="1.6" />
<path d="M 784.30 576.30 L 784.30 579.90" fill="none" stroke="#111" stroke-width="1.6" />
<path d="M 784.30 585.60 L 784.30 589.20" fill="none" stroke="#111" stroke-width="1.6" />
<path d="M 784.30 597.00 L 784.30 600.60" fill="none" stroke="#111" stroke-width="1.6" />
<path d="M 784.30 606.30 L 784.30 609.90" fill="none" stroke="#111" stroke-width="1.6" />
<path d="M 784.30 615.10 L 784.30 618.70" fill="none" stroke="#111" stroke-width="1.6" />
<path d="M 784.30 624.40 L 784.30 628.00" fill="none" stroke="#111" stroke-width="1.6" />
<path d="M 797.70 558.20 L 797.70 561.80" fill="none" stroke="#111" stroke-width="1.6" />
<path d="M 797.70 567.50 L 797.70 571.10" fill="none" stroke="#111" stroke-width="1.6" />
<path d="M 797.70 576.30 L 797.70 579.90" fill="none" stroke="#111" stroke-width="1.6" />
<path d="M 797.70 585.60 L 797.70 589.20" fill="none" stroke="#111" stroke-width="1.6" />
<path d="M 797.70 597.00 L 797.70 600.60" fill="none" stroke="#111" stroke-width="1.6" />
<path d="M 797.70 606.30 L 797.70 609.90" fill="none" stroke="#111" stroke-width="1.6" />
<path d="M 797.70 615.10 L 797.70 618.70" fill="none" stroke="#111" stroke-width="1.6" />
<path d="M 797.70 624.40 L 797.70 628.00" fill="none" stroke="#111" stroke-width="1.6" />
<path d="M 826.30 558.20 L 826.30 561.80" fill="none" stroke="#111" stroke-width="1.6" />
<path d="M 826.30 567.50 L 826.30 571.10" fill="none" stroke="#111" stroke-width="1.6" />
<path d="M 826.30 576.30 L 826.30 579.90" fill="none" stroke="#111" stroke-width="1.6" />
<path d="M 826.30 585.60 L 826.30 589.20" fill="none" stroke="#111" stroke-width="1.6" />
<path d="M 826.30 597.00 L 826.30 600.60" fill="none" stroke="#111" stroke-width="1.6" />
<path d="M 826.30 606.30 L 826.30 609.90" fill="none" stroke="#111" stroke-width="1.6" />
<path d="M 826.30 615.10 L 826.30 618.70" fill="none" stroke="#111" stroke-width="1.6" />
<path d="M 826.30 624.40 L 826.30 628.00" fill="none" stroke="#111" stroke-width="1.6" />
<path d="M 841.30 558.20 L 841.30 561.80" fill="none" stroke="#111" stroke-width="1.6" />
<path d="M 841.30 567.50 L 841.30 571.10" fill="none" stroke="#111" stroke-width="1.6" />
<path d="M 841.30 576.30 L 841.30 579.90" fill="none" stroke="#111" stroke-width="1.6" />
<path d="M 841.30 585.60 L 841.30 589.20" fill="none" stroke="#111" stroke-width="1.6" />
<path d="M 841.30 597.00 L 841.30 600.60" fill="none" stroke="#111" stroke-width="1.6" />
<path d="M 841.30 606.30 L 841.30 609.90" fill="none" stroke="#111" stroke-width="1.6" />
<path d="M 841.30 615.10 L 841.30 618.70" fill="none" stroke="#111" stroke-width="1.6" />
<path d="M 841.30 624.40 L 841.30 628.00" fill="none" stroke="#111" stroke-width="1.6" />
<rect x="768.4" y="553.4" width="4.4" height="4.4" fill="#000" />
<rect x="810.5" y="553.4" width="4.4" height="4.4" fill="#000" />
<rect x="852.3" y="553.4" width="4.4" height="4.4" fill="#000" />
<rect x="768.4" y="590.9" width="4.4" height="4.4" fill="#000" />
<rect x="852.3" y="590.9" width="4.4" height="4.4" fill="#000" />
<rect x="768.4" y="628.1999999999999" width="4.4" height="4.4" fill="#000" />
<rect x="810.5" y="628.1999999999999" width="4.4" height="4.4" fill="#000" />
<rect x="852.3" y="628.1999999999999" width="4.4" height="4.4" fill="#000" />
<circle cx="812.70" cy="593.10" r="2.6" fill="#000"/>
<rect x="873" y="540" width="117" height="107.5" fill="#ECE9D8" />
<rect x="873" y="540" width="117" height="1.8" fill="#FFFFFF" />
<rect x="873" y="540" width="1.8" height="107.5" fill="#FFFFFF" />
<rect x="988" y="540" width="2" height="107.5" fill="#716F64" />
<rect x="873" y="645.5" width="117" height="2" fill="#716F64" />
<rect x="986.5" y="541.8" width="1.5" height="103.7" fill="#ACA899" />
<rect x="874.8" y="644.0" width="113.2" height="1.5" fill="#ACA899" />
<rect x="877.8" y="543" width="108" height="99" fill="#C0C0C0" />
<rect x="909.6" y="551.5" width="1.6" height="84.5" fill="#F4F4F4" />
<rect x="932.0" y="551.5" width="1.6" height="84.5" fill="#F4F4F4" />
<rect x="956.0" y="551.5" width="1.6" height="84.5" fill="#F4F4F4" />
<rect x="887" y="571.2" width="92" height="1.6" fill="#F4F4F4" />
<rect x="887" y="592.2" width="92" height="1.6" fill="#F4F4F4" />
<rect x="887" y="614.8000000000001" width="92" height="1.6" fill="#F4F4F4" />
<text x="217" y="671.6" font-size="18" fill="#000" text-anchor="middle" font-weight="normal" textLength="78.6" lengthAdjust="spacingAndGlyphs" >Steel Deck</text>
<text x="331.1" y="671.6" font-size="18" fill="#000" text-anchor="middle" font-weight="normal" textLength="73" lengthAdjust="spacingAndGlyphs" >Staggered</text>
<text x="334.2" y="690.9" font-size="18" fill="#000" text-anchor="middle" font-weight="normal" textLength="36.7" lengthAdjust="spacingAndGlyphs" >Truss</text>
<text x="452.8" y="671.6" font-size="18" fill="#000" text-anchor="middle" font-weight="normal" textLength="60.4" lengthAdjust="spacingAndGlyphs" >Flat Slab</text>
<text x="570.3" y="671.6" font-size="18" fill="#000" text-anchor="middle" font-weight="normal" textLength="94" lengthAdjust="spacingAndGlyphs" >Flat Slab with</text>
<text x="573.4" y="690.9" font-size="18" fill="#000" text-anchor="middle" font-weight="normal" textLength="117.7" lengthAdjust="spacingAndGlyphs" >Perimeter Beams</text>
<text x="696.2" y="671.6" font-size="18" fill="#000" text-anchor="middle" font-weight="normal" textLength="82.2" lengthAdjust="spacingAndGlyphs" >Waffle Slab</text>
<text x="810" y="671.6" font-size="18" fill="#000" text-anchor="middle" font-weight="normal" textLength="86.1" lengthAdjust="spacingAndGlyphs" >Two Way or</text>
<text x="812.8" y="690.9" font-size="18" fill="#000" text-anchor="middle" font-weight="normal" textLength="86.7" lengthAdjust="spacingAndGlyphs" >Ribbed Slab</text>
<text x="931" y="671.6" font-size="18" fill="#000" text-anchor="middle" font-weight="bold" textLength="77.1" lengthAdjust="spacingAndGlyphs" >Grid Only</text>
<rect x="453" y="750" width="89.70000000000005" height="30" fill="#ECE9D8" />
<rect x="453" y="750" width="89.70000000000005" height="30" fill="#000" />
<rect x="454.5" y="751.5" width="86.70000000000005" height="27.0" fill="#ECE9D8" />
<rect x="454.5" y="751.5" width="86.70000000000005" height="1.5" fill="#FFFFFF" />
<rect x="454.5" y="751.5" width="1.5" height="27.0" fill="#FFFFFF" />
<rect x="539.7" y="751.5" width="1.5" height="27.0" fill="#716F64" />
<rect x="454.5" y="777.0" width="86.70000000000005" height="1.5" fill="#716F64" />
<rect x="538.2" y="753.0" width="1.5" height="24.0" fill="#ACA899" />
<rect x="456.0" y="775.5" width="83.70000000000005" height="1.5" fill="#ACA899" />
<text x="497.9" y="770.6" font-size="18" fill="#000" text-anchor="middle" font-weight="normal" textLength="21.4" lengthAdjust="spacingAndGlyphs" >OK</text>
<rect x="603.4" y="750" width="89.60000000000002" height="30" fill="#ECE9D8" />
<rect x="603.4" y="750" width="89.60000000000002" height="1.5" fill="#FFFFFF" />
<rect x="603.4" y="750" width="1.5" height="30" fill="#FFFFFF" />
<rect x="691.5" y="750" width="1.5" height="30" fill="#716F64" />
<rect x="603.4" y="778.5" width="89.60000000000002" height="1.5" fill="#716F64" />
<rect x="690" y="751.5" width="1.5" height="27" fill="#ACA899" />
<rect x="604.9" y="777" width="86.60000000000002" height="1.5" fill="#ACA899" />
<text x="648.3" y="770.6" font-size="18" fill="#000" text-anchor="middle" font-weight="normal" textLength="49.4" lengthAdjust="spacingAndGlyphs" >Cancel</text>
<rect x="108" y="812.8" width="930" height="1.9" fill="#7A786A" />
<rect x="108" y="814.7" width="930" height="1.2" fill="#6A96E4" />
<rect x="108" y="815.9" width="930" height="2.2" fill="#1A62E4" />
<rect x="108" y="817.8" width="930" height="43.2" fill="url(#tb)" />
<rect x="985" y="815.9" width="53" height="45.1" fill="url(#tbr)" />
<rect x="588.2" y="814.6" width="14.8" height="1.6" fill="#D8D2C0" />
<path d="M108 814.7 L117 814.7 Q110 817 108 823 Z" fill="#A8B8E4"/>
<rect x="108" y="861" width="7" height="567" fill="#0A58F2" />
<rect x="108" y="861" width="1.0" height="567" fill="#0038C0" />
<rect x="114" y="861" width="1.0" height="567" fill="#3C80F8" />
<rect x="115" y="861" width="923" height="567" fill="#ECE9D8" />
<text x="121.2" y="850.2" font-size="21" fill="#0A1E7A" text-anchor="start" font-weight="bold" textLength="95" lengthAdjust="spacingAndGlyphs" >Story Data</text>
<text x="120" y="849" font-size="21" fill="#FFFFFF" text-anchor="start" font-weight="bold" textLength="95" lengthAdjust="spacingAndGlyphs" >Story Data</text>
<rect x="121.3" y="864.5" width="910.5" height="1.5" fill="#ACA899" />
<rect x="121.3" y="864.5" width="1.5" height="564" fill="#ACA899" />
<rect x="122.8" y="866" width="908.5" height="1.5" fill="#FFFFFF" />
<rect x="122.8" y="866" width="1.5" height="562" fill="#FFFFFF" />
<rect x="1031.3" y="864.5" width="1.6" height="564" fill="#ACA899" />
<rect x="1032.9" y="864.5" width="2" height="564" fill="#FFFFFF" />
<rect x="141" y="887" width="872" height="436" fill="#ECE9D8" />
<rect x="190.7" y="913.0" width="117.60000000000002" height="24.02" fill="#FFFFFF" />
<rect x="308.3" y="913.0" width="117.19999999999999" height="24.02" fill="#FFFFFF" />
<rect x="542.7" y="913.0" width="116.79999999999995" height="24.02" fill="#FFFFFF" />
<rect x="776.7" y="913.0" width="117.19999999999993" height="24.02" fill="#FFFFFF" />
<rect x="893.9" y="913.0" width="117.39999999999998" height="24.02" fill="#FFFFFF" />
<rect x="190.7" y="937.02" width="117.60000000000002" height="24.02" fill="#FFFFFF" />
<rect x="308.3" y="937.02" width="117.19999999999999" height="24.02" fill="#FFFFFF" />
<rect x="542.7" y="937.02" width="116.79999999999995" height="24.02" fill="#FFFFFF" />
<rect x="659.5" y="937.02" width="117.20000000000005" height="24.02" fill="#FFFFFF" />
<rect x="776.7" y="937.02" width="117.19999999999993" height="24.02" fill="#FFFFFF" />
<rect x="893.9" y="937.02" width="117.39999999999998" height="24.02" fill="#FFFFFF" />
<rect x="190.7" y="961.04" width="117.60000000000002" height="24.02" fill="#FFFFFF" />
<rect x="308.3" y="961.04" width="117.19999999999999" height="24.02" fill="#FFFFFF" />
<rect x="542.7" y="961.04" width="116.79999999999995" height="24.02" fill="#FFFFFF" />
<rect x="659.5" y="961.04" width="117.20000000000005" height="24.02" fill="#FFFFFF" />
<rect x="776.7" y="961.04" width="117.19999999999993" height="24.02" fill="#FFFFFF" />
<rect x="893.9" y="961.04" width="117.39999999999998" height="24.02" fill="#FFFFFF" />
<rect x="190.7" y="985.06" width="117.60000000000002" height="24.02" fill="#FFFFFF" />
<rect x="308.3" y="985.06" width="117.19999999999999" height="24.02" fill="#FFFFFF" />
<rect x="542.7" y="985.06" width="116.79999999999995" height="24.02" fill="#FFFFFF" />
<rect x="659.5" y="985.06" width="117.20000000000005" height="24.02" fill="#FFFFFF" />
<rect x="776.7" y="985.06" width="117.19999999999993" height="24.02" fill="#FFFFFF" />
<rect x="893.9" y="985.06" width="117.39999999999998" height="24.02" fill="#FFFFFF" />
<rect x="190.7" y="1009.08" width="117.60000000000002" height="24.02" fill="#FFFFFF" />
<rect x="308.3" y="1009.08" width="117.19999999999999" height="24.02" fill="#FFFFFF" />
<rect x="542.7" y="1009.08" width="116.79999999999995" height="24.02" fill="#FFFFFF" />
<rect x="659.5" y="1009.08" width="117.20000000000005" height="24.02" fill="#FFFFFF" />
<rect x="776.7" y="1009.08" width="117.19999999999993" height="24.02" fill="#FFFFFF" />
<rect x="893.9" y="1009.08" width="117.39999999999998" height="24.02" fill="#FFFFFF" />
<rect x="190.7" y="1033.1" width="117.60000000000002" height="24.02" fill="#FFFFFF" />
<rect x="308.3" y="1033.1" width="117.19999999999999" height="24.02" fill="#FFFFFF" />
<rect x="542.7" y="1033.1" width="116.79999999999995" height="24.02" fill="#FFFFFF" />
<rect x="659.5" y="1033.1" width="117.20000000000005" height="24.02" fill="#FFFFFF" />
<rect x="776.7" y="1033.1" width="117.19999999999993" height="24.02" fill="#FFFFFF" />
<rect x="893.9" y="1033.1" width="117.39999999999998" height="24.02" fill="#FFFFFF" />
<rect x="190.7" y="1057.12" width="117.60000000000002" height="24.02" fill="#FFFFFF" />
<rect x="308.3" y="1057.12" width="117.19999999999999" height="24.02" fill="#FFFFFF" />
<rect x="542.7" y="1057.12" width="116.79999999999995" height="24.02" fill="#FFFFFF" />
<rect x="659.5" y="1057.12" width="117.20000000000005" height="24.02" fill="#FFFFFF" />
<rect x="776.7" y="1057.12" width="117.19999999999993" height="24.02" fill="#FFFFFF" />
<rect x="893.9" y="1057.12" width="117.39999999999998" height="24.02" fill="#FFFFFF" />
<rect x="190.7" y="1081.1399999999999" width="117.60000000000002" height="24.02" fill="#FFFFFF" />
<rect x="308.3" y="1081.1399999999999" width="117.19999999999999" height="24.02" fill="#FFFFFF" />
<rect x="542.7" y="1081.1399999999999" width="116.79999999999995" height="24.02" fill="#FFFFFF" />
<rect x="659.5" y="1081.1399999999999" width="117.20000000000005" height="24.02" fill="#FFFFFF" />
<rect x="776.7" y="1081.1399999999999" width="117.19999999999993" height="24.02" fill="#FFFFFF" />
<rect x="893.9" y="1081.1399999999999" width="117.39999999999998" height="24.02" fill="#FFFFFF" />
<rect x="190.7" y="1105.16" width="117.60000000000002" height="24.02" fill="#FFFFFF" />
<rect x="308.3" y="1105.16" width="117.19999999999999" height="24.02" fill="#FFFFFF" />
<rect x="542.7" y="1105.16" width="116.79999999999995" height="24.02" fill="#FFFFFF" />
<rect x="659.5" y="1105.16" width="117.20000000000005" height="24.02" fill="#FFFFFF" />
<rect x="776.7" y="1105.16" width="117.19999999999993" height="24.02" fill="#FFFFFF" />
<rect x="893.9" y="1105.16" width="117.39999999999998" height="24.02" fill="#FFFFFF" />
<rect x="190.7" y="1129.18" width="117.60000000000002" height="24.02" fill="#FFFFFF" />
<rect x="308.3" y="1129.18" width="117.19999999999999" height="24.02" fill="#FFFFFF" />
<rect x="542.7" y="1129.18" width="116.79999999999995" height="24.02" fill="#FFFFFF" />
<rect x="659.5" y="1129.18" width="117.20000000000005" height="24.02" fill="#FFFFFF" />
<rect x="776.7" y="1129.18" width="117.19999999999993" height="24.02" fill="#FFFFFF" />
<rect x="893.9" y="1129.18" width="117.39999999999998" height="24.02" fill="#FFFFFF" />
<rect x="190.7" y="1153.2" width="117.60000000000002" height="24.02" fill="#FFFFFF" />
<rect x="308.3" y="1153.2" width="117.19999999999999" height="24.02" fill="#FFFFFF" />
<rect x="542.7" y="1153.2" width="116.79999999999995" height="24.02" fill="#FFFFFF" />
<rect x="659.5" y="1153.2" width="117.20000000000005" height="24.02" fill="#FFFFFF" />
<rect x="776.7" y="1153.2" width="117.19999999999993" height="24.02" fill="#FFFFFF" />
<rect x="893.9" y="1153.2" width="117.39999999999998" height="24.02" fill="#FFFFFF" />
<rect x="190.7" y="1177.22" width="117.60000000000002" height="24.02" fill="#FFFFFF" />
<rect x="308.3" y="1177.22" width="117.19999999999999" height="24.02" fill="#FFFFFF" />
<rect x="542.7" y="1177.22" width="116.79999999999995" height="24.02" fill="#FFFFFF" />
<rect x="659.5" y="1177.22" width="117.20000000000005" height="24.02" fill="#FFFFFF" />
<rect x="776.7" y="1177.22" width="117.19999999999993" height="24.02" fill="#FFFFFF" />
<rect x="893.9" y="1177.22" width="117.39999999999998" height="24.02" fill="#FFFFFF" />
<rect x="190.7" y="1201.24" width="117.60000000000002" height="24.02" fill="#FFFFFF" />
<rect x="308.3" y="1201.24" width="117.19999999999999" height="24.02" fill="#FFFFFF" />
<rect x="542.7" y="1201.24" width="116.79999999999995" height="24.02" fill="#FFFFFF" />
<rect x="659.5" y="1201.24" width="117.20000000000005" height="24.02" fill="#FFFFFF" />
<rect x="776.7" y="1201.24" width="117.19999999999993" height="24.02" fill="#FFFFFF" />
<rect x="893.9" y="1201.24" width="117.39999999999998" height="24.02" fill="#FFFFFF" />
<rect x="190.7" y="1225.26" width="117.60000000000002" height="24.02" fill="#FFFFFF" />
<rect x="308.3" y="1225.26" width="117.19999999999999" height="24.02" fill="#FFFFFF" />
<rect x="542.7" y="1225.26" width="116.79999999999995" height="24.02" fill="#FFFFFF" />
<rect x="659.5" y="1225.26" width="117.20000000000005" height="24.02" fill="#FFFFFF" />
<rect x="776.7" y="1225.26" width="117.19999999999993" height="24.02" fill="#FFFFFF" />
<rect x="893.9" y="1225.26" width="117.39999999999998" height="24.02" fill="#FFFFFF" />
<rect x="190.7" y="1249.28" width="117.60000000000002" height="24.02" fill="#FFFFFF" />
<rect x="308.3" y="1249.28" width="117.19999999999999" height="24.02" fill="#FFFFFF" />
<rect x="542.7" y="1249.28" width="116.79999999999995" height="24.02" fill="#FFFFFF" />
<rect x="659.5" y="1249.28" width="117.20000000000005" height="24.02" fill="#FFFFFF" />
<rect x="776.7" y="1249.28" width="117.19999999999993" height="24.02" fill="#FFFFFF" />
<rect x="893.9" y="1249.28" width="117.39999999999998" height="24.02" fill="#FFFFFF" />
<rect x="425.5" y="1273.3" width="117.20000000000005" height="24.02" fill="#FFFFFF" />
<rect x="190.7" y="936.27" width="820.5999999999999" height="1.5" fill="#A0A0A0" />
<rect x="190.7" y="960.29" width="820.5999999999999" height="1.5" fill="#A0A0A0" />
<rect x="190.7" y="984.31" width="820.5999999999999" height="1.5" fill="#A0A0A0" />
<rect x="190.7" y="1008.33" width="820.5999999999999" height="1.5" fill="#A0A0A0" />
<rect x="190.7" y="1032.35" width="820.5999999999999" height="1.5" fill="#A0A0A0" />
<rect x="190.7" y="1056.37" width="820.5999999999999" height="1.5" fill="#A0A0A0" />
<rect x="190.7" y="1080.3899999999999" width="820.5999999999999" height="1.5" fill="#A0A0A0" />
<rect x="190.7" y="1104.41" width="820.5999999999999" height="1.5" fill="#A0A0A0" />
<rect x="190.7" y="1128.43" width="820.5999999999999" height="1.5" fill="#A0A0A0" />
<rect x="190.7" y="1152.45" width="820.5999999999999" height="1.5" fill="#A0A0A0" />
<rect x="190.7" y="1176.47" width="820.5999999999999" height="1.5" fill="#A0A0A0" />
<rect x="190.7" y="1200.49" width="820.5999999999999" height="1.5" fill="#A0A0A0" />
<rect x="190.7" y="1224.51" width="820.5999999999999" height="1.5" fill="#A0A0A0" />
<rect x="190.7" y="1248.53" width="820.5999999999999" height="1.5" fill="#A0A0A0" />
<rect x="190.7" y="1272.55" width="820.5999999999999" height="1.5" fill="#A0A0A0" />
<rect x="190.7" y="1296.57" width="820.5999999999999" height="1.5" fill="#A0A0A0" />
<rect x="307.55" y="913" width="1.5" height="408" fill="#A0A0A0" />
<rect x="424.75" y="913" width="1.5" height="408" fill="#A0A0A0" />
<rect x="541.95" y="913" width="1.5" height="408" fill="#A0A0A0" />
<rect x="658.75" y="913" width="1.5" height="408" fill="#A0A0A0" />
<rect x="775.95" y="913" width="1.5" height="408" fill="#A0A0A0" />
<rect x="893.15" y="913" width="1.5" height="408" fill="#A0A0A0" />
<rect x="142" y="936.12" width="48.69999999999999" height="1.8" fill="#222" />
<rect x="142" y="960.14" width="48.69999999999999" height="1.8" fill="#222" />
<rect x="142" y="984.16" width="48.69999999999999" height="1.8" fill="#222" />
<rect x="142" y="1008.1800000000001" width="48.69999999999999" height="1.8" fill="#222" />
<rect x="142" y="1032.1999999999998" width="48.69999999999999" height="1.8" fill="#222" />
<rect x="142" y="1056.2199999999998" width="48.69999999999999" height="1.8" fill="#222" />
<rect x="142" y="1080.2399999999998" width="48.69999999999999" height="1.8" fill="#222" />
<rect x="142" y="1104.26" width="48.69999999999999" height="1.8" fill="#222" />
<rect x="142" y="1128.28" width="48.69999999999999" height="1.8" fill="#222" />
<rect x="142" y="1152.3" width="48.69999999999999" height="1.8" fill="#222" />
<rect x="142" y="1176.32" width="48.69999999999999" height="1.8" fill="#222" />
<rect x="142" y="1200.34" width="48.69999999999999" height="1.8" fill="#222" />
<rect x="142" y="1224.36" width="48.69999999999999" height="1.8" fill="#222" />
<rect x="142" y="1248.3799999999999" width="48.69999999999999" height="1.8" fill="#222" />
<rect x="142" y="1272.3999999999999" width="48.69999999999999" height="1.8" fill="#222" />
<rect x="142" y="1296.4199999999998" width="48.69999999999999" height="1.8" fill="#222" />
<rect x="189.79999999999998" y="890" width="1.8" height="431" fill="#222" />
<rect x="307.40000000000003" y="890" width="1.8" height="23" fill="#222" />
<rect x="424.6" y="890" width="1.8" height="23" fill="#222" />
<rect x="541.8000000000001" y="890" width="1.8" height="23" fill="#222" />
<rect x="658.6" y="890" width="1.8" height="23" fill="#222" />
<rect x="775.8000000000001" y="890" width="1.8" height="23" fill="#222" />
<rect x="893.0" y="890" width="1.8" height="23" fill="#222" />
<rect x="142" y="911.5" width="869.3" height="1.8" fill="#222" />
<rect x="1010.3" y="890" width="2" height="431" fill="#222" />
<rect x="141" y="887" width="871" height="1.6" fill="#ACA899" />
<rect x="141" y="887" width="1.6" height="435" fill="#ACA899" />
<rect x="142.6" y="888.6" width="869" height="1.6" fill="#716F64" />
<rect x="142.6" y="888.6" width="1.6" height="433" fill="#716F64" />
<rect x="1011.8" y="887" width="1.8" height="436" fill="#F1EFE2" />
<rect x="141" y="1321" width="872" height="2" fill="#FFFFFF" />
<defs><pattern id="chk" width="2.9" height="2.9" patternUnits="userSpaceOnUse"><rect width="2.9" height="2.9" fill="#D8D6CC"/><rect width="1.45" height="1.45" fill="#202030"/><rect x="1.45" y="1.45" width="1.45" height="1.45" fill="#202030"/></pattern>
<clipPath id="selclip"><rect x="428" y="1252" width="111.5" height="19"/></clipPath></defs>
<rect x="425.5" y="1248.78" width="117" height="24.02" fill="url(#chk)" />
<rect x="428.6" y="1251.8799999999999" width="110.8" height="18.02" fill="#ECE9D8" />
<g clip-path="url(#selclip)">
<text x="430.5" y="1268.28" font-size="18" fill="#000" text-anchor="start" font-weight="normal" textLength="111.5" lengthAdjust="spacingAndGlyphs" >1999999999999</text>
</g>
<text x="250.9" y="908.2" font-size="18" fill="#000" text-anchor="middle" font-weight="normal" textLength="39.3" lengthAdjust="spacingAndGlyphs" >Label</text>
<text x="367.3" y="908.2" font-size="18" fill="#000" text-anchor="middle" font-weight="normal" textLength="46.6" lengthAdjust="spacingAndGlyphs" >Height</text>
<text x="485.2" y="908.2" font-size="18" fill="#000" text-anchor="middle" font-weight="normal" textLength="66" lengthAdjust="spacingAndGlyphs" >Elevation</text>
<text x="601.4" y="908.2" font-size="18" fill="#000" text-anchor="middle" font-weight="normal" textLength="88.1" lengthAdjust="spacingAndGlyphs" >Master Story</text>
<text x="719.4" y="908.2" font-size="18" fill="#000" text-anchor="middle" font-weight="normal" textLength="69.2" lengthAdjust="spacingAndGlyphs" >Similar To</text>
<text x="836.4" y="908.2" font-size="18" fill="#000" text-anchor="middle" font-weight="normal" textLength="83.8" lengthAdjust="spacingAndGlyphs" >Splice Point</text>
<text x="952.9" y="908.2" font-size="18" fill="#000" text-anchor="middle" font-weight="normal" textLength="95" lengthAdjust="spacingAndGlyphs" >Splice Height</text>
<text x="168.5" y="932.1" font-size="18" fill="#000" text-anchor="middle" font-weight="normal" textLength="17.68" lengthAdjust="spacingAndGlyphs" >16</text>
<text x="249.5" y="932.1" font-size="18" fill="#000" text-anchor="middle" font-weight="normal" textLength="71.86" lengthAdjust="spacingAndGlyphs" >STORY15</text>
<text x="366.9" y="932.1" font-size="18" fill="#000" text-anchor="middle" font-weight="normal" textLength="22.09" lengthAdjust="spacingAndGlyphs" >3.2</text>
<text x="484.1" y="932.1" font-size="18" fill="#000" text-anchor="middle" font-weight="normal" textLength="30.93" lengthAdjust="spacingAndGlyphs" >46.6</text>
<text x="601.1" y="932.1" font-size="18" fill="#000" text-anchor="middle" font-weight="normal" textLength="25.93" lengthAdjust="spacingAndGlyphs" >Yes</text>
<text x="835.3" y="932.1" font-size="18" fill="#000" text-anchor="middle" font-weight="normal" textLength="20.32" lengthAdjust="spacingAndGlyphs" >No</text>
<text x="952.5999999999999" y="932.1" font-size="18" fill="#000" text-anchor="middle" font-weight="normal" textLength="13.25" lengthAdjust="spacingAndGlyphs" >0.</text>
<text x="168.5" y="956.12" font-size="18" fill="#000" text-anchor="middle" font-weight="normal" textLength="17.68" lengthAdjust="spacingAndGlyphs" >15</text>
<text x="249.5" y="956.12" font-size="18" fill="#000" text-anchor="middle" font-weight="normal" textLength="71.86" lengthAdjust="spacingAndGlyphs" >STORY14</text>
<text x="366.9" y="956.12" font-size="18" fill="#000" text-anchor="middle" font-weight="normal" textLength="22.09" lengthAdjust="spacingAndGlyphs" >3.2</text>
<text x="484.1" y="956.12" font-size="18" fill="#000" text-anchor="middle" font-weight="normal" textLength="30.93" lengthAdjust="spacingAndGlyphs" >43.4</text>
<text x="601.1" y="956.12" font-size="18" fill="#000" text-anchor="middle" font-weight="normal" textLength="20.32" lengthAdjust="spacingAndGlyphs" >No</text>
<text x="718.1" y="956.12" font-size="18" fill="#000" text-anchor="middle" font-weight="normal" textLength="71.86" lengthAdjust="spacingAndGlyphs" >STORY15</text>
<text x="835.3" y="956.12" font-size="18" fill="#000" text-anchor="middle" font-weight="normal" textLength="20.32" lengthAdjust="spacingAndGlyphs" >No</text>
<text x="952.5999999999999" y="956.12" font-size="18" fill="#000" text-anchor="middle" font-weight="normal" textLength="13.25" lengthAdjust="spacingAndGlyphs" >0.</text>
<text x="168.5" y="980.14" font-size="18" fill="#000" text-anchor="middle" font-weight="normal" textLength="17.68" lengthAdjust="spacingAndGlyphs" >14</text>
<text x="249.5" y="980.14" font-size="18" fill="#000" text-anchor="middle" font-weight="normal" textLength="71.86" lengthAdjust="spacingAndGlyphs" >STORY13</text>
<text x="366.9" y="980.14" font-size="18" fill="#000" text-anchor="middle" font-weight="normal" textLength="22.09" lengthAdjust="spacingAndGlyphs" >3.2</text>
<text x="484.1" y="980.14" font-size="18" fill="#000" text-anchor="middle" font-weight="normal" textLength="30.93" lengthAdjust="spacingAndGlyphs" >40.2</text>
<text x="601.1" y="980.14" font-size="18" fill="#000" text-anchor="middle" font-weight="normal" textLength="20.32" lengthAdjust="spacingAndGlyphs" >No</text>
<text x="718.1" y="980.14" font-size="18" fill="#000" text-anchor="middle" font-weight="normal" textLength="71.86" lengthAdjust="spacingAndGlyphs" >STORY15</text>
<text x="835.3" y="980.14" font-size="18" fill="#000" text-anchor="middle" font-weight="normal" textLength="20.32" lengthAdjust="spacingAndGlyphs" >No</text>
<text x="952.5999999999999" y="980.14" font-size="18" fill="#000" text-anchor="middle" font-weight="normal" textLength="13.25" lengthAdjust="spacingAndGlyphs" >0.</text>
<text x="168.5" y="1004.16" font-size="18" fill="#000" text-anchor="middle" font-weight="normal" textLength="17.68" lengthAdjust="spacingAndGlyphs" >13</text>
<text x="249.5" y="1004.16" font-size="18" fill="#000" text-anchor="middle" font-weight="normal" textLength="71.86" lengthAdjust="spacingAndGlyphs" >STORY12</text>
<text x="366.9" y="1004.16" font-size="18" fill="#000" text-anchor="middle" font-weight="normal" textLength="22.09" lengthAdjust="spacingAndGlyphs" >3.2</text>
<text x="484.1" y="1004.16" font-size="18" fill="#000" text-anchor="middle" font-weight="normal" textLength="17.68" lengthAdjust="spacingAndGlyphs" >37</text>
<text x="601.1" y="1004.16" font-size="18" fill="#000" text-anchor="middle" font-weight="normal" textLength="20.32" lengthAdjust="spacingAndGlyphs" >No</text>
<text x="718.1" y="1004.16" font-size="18" fill="#000" text-anchor="middle" font-weight="normal" textLength="71.86" lengthAdjust="spacingAndGlyphs" >STORY15</text>
<text x="835.3" y="1004.16" font-size="18" fill="#000" text-anchor="middle" font-weight="normal" textLength="20.32" lengthAdjust="spacingAndGlyphs" >No</text>
<text x="952.5999999999999" y="1004.16" font-size="18" fill="#000" text-anchor="middle" font-weight="normal" textLength="13.25" lengthAdjust="spacingAndGlyphs" >0.</text>
<text x="168.5" y="1028.18" font-size="18" fill="#000" text-anchor="middle" font-weight="normal" textLength="17.68" lengthAdjust="spacingAndGlyphs" >12</text>
<text x="249.5" y="1028.18" font-size="18" fill="#000" text-anchor="middle" font-weight="normal" textLength="70.68" lengthAdjust="spacingAndGlyphs" >STORY11</text>
<text x="366.9" y="1028.18" font-size="18" fill="#000" text-anchor="middle" font-weight="normal" textLength="22.09" lengthAdjust="spacingAndGlyphs" >3.2</text>
<text x="484.1" y="1028.18" font-size="18" fill="#000" text-anchor="middle" font-weight="normal" textLength="30.93" lengthAdjust="spacingAndGlyphs" >33.8</text>
<text x="601.1" y="1028.18" font-size="18" fill="#000" text-anchor="middle" font-weight="normal" textLength="20.32" lengthAdjust="spacingAndGlyphs" >No</text>
<text x="718.1" y="1028.18" font-size="18" fill="#000" text-anchor="middle" font-weight="normal" textLength="71.86" lengthAdjust="spacingAndGlyphs" >STORY15</text>
<text x="835.3" y="1028.18" font-size="18" fill="#000" text-anchor="middle" font-weight="normal" textLength="20.32" lengthAdjust="spacingAndGlyphs" >No</text>
<text x="952.5999999999999" y="1028.18" font-size="18" fill="#000" text-anchor="middle" font-weight="normal" textLength="13.25" lengthAdjust="spacingAndGlyphs" >0.</text>
<text x="168.5" y="1052.1999999999998" font-size="18" fill="#000" text-anchor="middle" font-weight="normal" textLength="16.49" lengthAdjust="spacingAndGlyphs" >11</text>
<text x="249.5" y="1052.1999999999998" font-size="18" fill="#000" text-anchor="middle" font-weight="normal" textLength="71.86" lengthAdjust="spacingAndGlyphs" >STORY10</text>
<text x="366.9" y="1052.1999999999998" font-size="18" fill="#000" text-anchor="middle" font-weight="normal" textLength="22.09" lengthAdjust="spacingAndGlyphs" >3.2</text>
<text x="484.1" y="1052.1999999999998" font-size="18" fill="#000" text-anchor="middle" font-weight="normal" textLength="30.93" lengthAdjust="spacingAndGlyphs" >30.6</text>
<text x="601.1" y="1052.1999999999998" font-size="18" fill="#000" text-anchor="middle" font-weight="normal" textLength="20.32" lengthAdjust="spacingAndGlyphs" >No</text>
<text x="718.1" y="1052.1999999999998" font-size="18" fill="#000" text-anchor="middle" font-weight="normal" textLength="71.86" lengthAdjust="spacingAndGlyphs" >STORY15</text>
<text x="835.3" y="1052.1999999999998" font-size="18" fill="#000" text-anchor="middle" font-weight="normal" textLength="20.32" lengthAdjust="spacingAndGlyphs" >No</text>
<text x="952.5999999999999" y="1052.1999999999998" font-size="18" fill="#000" text-anchor="middle" font-weight="normal" textLength="13.25" lengthAdjust="spacingAndGlyphs" >0.</text>
<text x="168.5" y="1076.2199999999998" font-size="18" fill="#000" text-anchor="middle" font-weight="normal" textLength="17.68" lengthAdjust="spacingAndGlyphs" >10</text>
<text x="249.5" y="1076.2199999999998" font-size="18" fill="#000" text-anchor="middle" font-weight="normal" textLength="63.02" lengthAdjust="spacingAndGlyphs" >STORY9</text>
<text x="366.9" y="1076.2199999999998" font-size="18" fill="#000" text-anchor="middle" font-weight="normal" textLength="22.09" lengthAdjust="spacingAndGlyphs" >3.2</text>
<text x="484.1" y="1076.2199999999998" font-size="18" fill="#000" text-anchor="middle" font-weight="normal" textLength="30.93" lengthAdjust="spacingAndGlyphs" >27.4</text>
<text x="601.1" y="1076.2199999999998" font-size="18" fill="#000" text-anchor="middle" font-weight="normal" textLength="20.32" lengthAdjust="spacingAndGlyphs" >No</text>
<text x="718.1" y="1076.2199999999998" font-size="18" fill="#000" text-anchor="middle" font-weight="normal" textLength="71.86" lengthAdjust="spacingAndGlyphs" >STORY15</text>
<text x="835.3" y="1076.2199999999998" font-size="18" fill="#000" text-anchor="middle" font-weight="normal" textLength="20.32" lengthAdjust="spacingAndGlyphs" >No</text>
<text x="952.5999999999999" y="1076.2199999999998" font-size="18" fill="#000" text-anchor="middle" font-weight="normal" textLength="13.25" lengthAdjust="spacingAndGlyphs" >0.</text>
<text x="168.5" y="1100.2399999999998" font-size="18" fill="#000" text-anchor="middle" font-weight="normal" textLength="8.84" lengthAdjust="spacingAndGlyphs" >9</text>
<text x="249.5" y="1100.2399999999998" font-size="18" fill="#000" text-anchor="middle" font-weight="normal" textLength="63.02" lengthAdjust="spacingAndGlyphs" >STORY8</text>
<text x="366.9" y="1100.2399999999998" font-size="18" fill="#000" text-anchor="middle" font-weight="normal" textLength="22.09" lengthAdjust="spacingAndGlyphs" >3.2</text>
<text x="484.1" y="1100.2399999999998" font-size="18" fill="#000" text-anchor="middle" font-weight="normal" textLength="30.93" lengthAdjust="spacingAndGlyphs" >24.2</text>
<text x="601.1" y="1100.2399999999998" font-size="18" fill="#000" text-anchor="middle" font-weight="normal" textLength="20.32" lengthAdjust="spacingAndGlyphs" >No</text>
<text x="718.1" y="1100.2399999999998" font-size="18" fill="#000" text-anchor="middle" font-weight="normal" textLength="71.86" lengthAdjust="spacingAndGlyphs" >STORY15</text>
<text x="835.3" y="1100.2399999999998" font-size="18" fill="#000" text-anchor="middle" font-weight="normal" textLength="20.32" lengthAdjust="spacingAndGlyphs" >No</text>
<text x="952.5999999999999" y="1100.2399999999998" font-size="18" fill="#000" text-anchor="middle" font-weight="normal" textLength="13.25" lengthAdjust="spacingAndGlyphs" >0.</text>
<text x="168.5" y="1124.26" font-size="18" fill="#000" text-anchor="middle" font-weight="normal" textLength="8.84" lengthAdjust="spacingAndGlyphs" >8</text>
<text x="249.5" y="1124.26" font-size="18" fill="#000" text-anchor="middle" font-weight="normal" textLength="63.02" lengthAdjust="spacingAndGlyphs" >STORY7</text>
<text x="366.9" y="1124.26" font-size="18" fill="#000" text-anchor="middle" font-weight="normal" textLength="22.09" lengthAdjust="spacingAndGlyphs" >3.2</text>
<text x="484.1" y="1124.26" font-size="18" fill="#000" text-anchor="middle" font-weight="normal" textLength="17.68" lengthAdjust="spacingAndGlyphs" >21</text>
<text x="601.1" y="1124.26" font-size="18" fill="#000" text-anchor="middle" font-weight="normal" textLength="20.32" lengthAdjust="spacingAndGlyphs" >No</text>
<text x="718.1" y="1124.26" font-size="18" fill="#000" text-anchor="middle" font-weight="normal" textLength="71.86" lengthAdjust="spacingAndGlyphs" >STORY15</text>
<text x="835.3" y="1124.26" font-size="18" fill="#000" text-anchor="middle" font-weight="normal" textLength="20.32" lengthAdjust="spacingAndGlyphs" >No</text>
<text x="952.5999999999999" y="1124.26" font-size="18" fill="#000" text-anchor="middle" font-weight="normal" textLength="13.25" lengthAdjust="spacingAndGlyphs" >0.</text>
<text x="168.5" y="1148.28" font-size="18" fill="#000" text-anchor="middle" font-weight="normal" textLength="8.84" lengthAdjust="spacingAndGlyphs" >7</text>
<text x="249.5" y="1148.28" font-size="18" fill="#000" text-anchor="middle" font-weight="normal" textLength="63.02" lengthAdjust="spacingAndGlyphs" >STORY6</text>
<text x="366.9" y="1148.28" font-size="18" fill="#000" text-anchor="middle" font-weight="normal" textLength="22.09" lengthAdjust="spacingAndGlyphs" >3.2</text>
<text x="484.1" y="1148.28" font-size="18" fill="#000" text-anchor="middle" font-weight="normal" textLength="30.93" lengthAdjust="spacingAndGlyphs" >17.8</text>
<text x="601.1" y="1148.28" font-size="18" fill="#000" text-anchor="middle" font-weight="normal" textLength="20.32" lengthAdjust="spacingAndGlyphs" >No</text>
<text x="718.1" y="1148.28" font-size="18" fill="#000" text-anchor="middle" font-weight="normal" textLength="71.86" lengthAdjust="spacingAndGlyphs" >STORY15</text>
<text x="835.3" y="1148.28" font-size="18" fill="#000" text-anchor="middle" font-weight="normal" textLength="20.32" lengthAdjust="spacingAndGlyphs" >No</text>
<text x="952.5999999999999" y="1148.28" font-size="18" fill="#000" text-anchor="middle" font-weight="normal" textLength="13.25" lengthAdjust="spacingAndGlyphs" >0.</text>
<text x="168.5" y="1172.3" font-size="18" fill="#000" text-anchor="middle" font-weight="normal" textLength="8.84" lengthAdjust="spacingAndGlyphs" >6</text>
<text x="249.5" y="1172.3" font-size="18" fill="#000" text-anchor="middle" font-weight="normal" textLength="63.02" lengthAdjust="spacingAndGlyphs" >STORY5</text>
<text x="366.9" y="1172.3" font-size="18" fill="#000" text-anchor="middle" font-weight="normal" textLength="22.09" lengthAdjust="spacingAndGlyphs" >3.2</text>
<text x="484.1" y="1172.3" font-size="18" fill="#000" text-anchor="middle" font-weight="normal" textLength="30.93" lengthAdjust="spacingAndGlyphs" >14.6</text>
<text x="601.1" y="1172.3" font-size="18" fill="#000" text-anchor="middle" font-weight="normal" textLength="20.32" lengthAdjust="spacingAndGlyphs" >No</text>
<text x="718.1" y="1172.3" font-size="18" fill="#000" text-anchor="middle" font-weight="normal" textLength="71.86" lengthAdjust="spacingAndGlyphs" >STORY15</text>
<text x="835.3" y="1172.3" font-size="18" fill="#000" text-anchor="middle" font-weight="normal" textLength="20.32" lengthAdjust="spacingAndGlyphs" >No</text>
<text x="952.5999999999999" y="1172.3" font-size="18" fill="#000" text-anchor="middle" font-weight="normal" textLength="13.25" lengthAdjust="spacingAndGlyphs" >0.</text>
<text x="168.5" y="1196.32" font-size="18" fill="#000" text-anchor="middle" font-weight="normal" textLength="8.84" lengthAdjust="spacingAndGlyphs" >5</text>
<text x="249.5" y="1196.32" font-size="18" fill="#000" text-anchor="middle" font-weight="normal" textLength="63.02" lengthAdjust="spacingAndGlyphs" >STORY4</text>
<text x="366.9" y="1196.32" font-size="18" fill="#000" text-anchor="middle" font-weight="normal" textLength="22.09" lengthAdjust="spacingAndGlyphs" >3.2</text>
<text x="484.1" y="1196.32" font-size="18" fill="#000" text-anchor="middle" font-weight="normal" textLength="29.74" lengthAdjust="spacingAndGlyphs" >11.4</text>
<text x="601.1" y="1196.32" font-size="18" fill="#000" text-anchor="middle" font-weight="normal" textLength="20.32" lengthAdjust="spacingAndGlyphs" >No</text>
<text x="718.1" y="1196.32" font-size="18" fill="#000" text-anchor="middle" font-weight="normal" textLength="71.86" lengthAdjust="spacingAndGlyphs" >STORY15</text>
<text x="835.3" y="1196.32" font-size="18" fill="#000" text-anchor="middle" font-weight="normal" textLength="20.32" lengthAdjust="spacingAndGlyphs" >No</text>
<text x="952.5999999999999" y="1196.32" font-size="18" fill="#000" text-anchor="middle" font-weight="normal" textLength="13.25" lengthAdjust="spacingAndGlyphs" >0.</text>
<text x="168.5" y="1220.34" font-size="18" fill="#000" text-anchor="middle" font-weight="normal" textLength="8.84" lengthAdjust="spacingAndGlyphs" >4</text>
<text x="249.5" y="1220.34" font-size="18" fill="#000" text-anchor="middle" font-weight="normal" textLength="63.02" lengthAdjust="spacingAndGlyphs" >STORY3</text>
<text x="366.9" y="1220.34" font-size="18" fill="#000" text-anchor="middle" font-weight="normal" textLength="22.09" lengthAdjust="spacingAndGlyphs" >3.2</text>
<text x="484.1" y="1220.34" font-size="18" fill="#000" text-anchor="middle" font-weight="normal" textLength="22.09" lengthAdjust="spacingAndGlyphs" >8.2</text>
<text x="601.1" y="1220.34" font-size="18" fill="#000" text-anchor="middle" font-weight="normal" textLength="20.32" lengthAdjust="spacingAndGlyphs" >No</text>
<text x="718.1" y="1220.34" font-size="18" fill="#000" text-anchor="middle" font-weight="normal" textLength="71.86" lengthAdjust="spacingAndGlyphs" >STORY15</text>
<text x="835.3" y="1220.34" font-size="18" fill="#000" text-anchor="middle" font-weight="normal" textLength="20.32" lengthAdjust="spacingAndGlyphs" >No</text>
<text x="952.5999999999999" y="1220.34" font-size="18" fill="#000" text-anchor="middle" font-weight="normal" textLength="13.25" lengthAdjust="spacingAndGlyphs" >0.</text>
<text x="168.5" y="1244.36" font-size="18" fill="#000" text-anchor="middle" font-weight="normal" textLength="8.84" lengthAdjust="spacingAndGlyphs" >3</text>
<text x="249.5" y="1244.36" font-size="18" fill="#000" text-anchor="middle" font-weight="normal" textLength="63.02" lengthAdjust="spacingAndGlyphs" >STORY2</text>
<text x="366.9" y="1244.36" font-size="18" fill="#000" text-anchor="middle" font-weight="normal" textLength="8.84" lengthAdjust="spacingAndGlyphs" >4</text>
<text x="484.1" y="1244.36" font-size="18" fill="#000" text-anchor="middle" font-weight="normal" textLength="8.84" lengthAdjust="spacingAndGlyphs" >5</text>
<text x="601.1" y="1244.36" font-size="18" fill="#000" text-anchor="middle" font-weight="normal" textLength="20.32" lengthAdjust="spacingAndGlyphs" >No</text>
<text x="718.1" y="1244.36" font-size="18" fill="#000" text-anchor="middle" font-weight="normal" textLength="71.86" lengthAdjust="spacingAndGlyphs" >STORY15</text>
<text x="835.3" y="1244.36" font-size="18" fill="#000" text-anchor="middle" font-weight="normal" textLength="20.32" lengthAdjust="spacingAndGlyphs" >No</text>
<text x="952.5999999999999" y="1244.36" font-size="18" fill="#000" text-anchor="middle" font-weight="normal" textLength="13.25" lengthAdjust="spacingAndGlyphs" >0.</text>
<text x="168.5" y="1268.3799999999999" font-size="18" fill="#000" text-anchor="middle" font-weight="normal" textLength="8.84" lengthAdjust="spacingAndGlyphs" >2</text>
<text x="249.5" y="1268.3799999999999" font-size="18" fill="#000" text-anchor="middle" font-weight="normal" textLength="63.02" lengthAdjust="spacingAndGlyphs" >STORY1</text>
<text x="366.9" y="1268.3799999999999" font-size="18" fill="#000" text-anchor="middle" font-weight="normal" textLength="13.25" lengthAdjust="spacingAndGlyphs" >1.</text>
<text x="601.1" y="1268.3799999999999" font-size="18" fill="#000" text-anchor="middle" font-weight="normal" textLength="20.32" lengthAdjust="spacingAndGlyphs" >No</text>
<text x="718.1" y="1268.3799999999999" font-size="18" fill="#000" text-anchor="middle" font-weight="normal" textLength="71.86" lengthAdjust="spacingAndGlyphs" >STORY15</text>
<text x="835.3" y="1268.3799999999999" font-size="18" fill="#000" text-anchor="middle" font-weight="normal" textLength="20.32" lengthAdjust="spacingAndGlyphs" >No</text>
<text x="952.5999999999999" y="1268.3799999999999" font-size="18" fill="#000" text-anchor="middle" font-weight="normal" textLength="13.25" lengthAdjust="spacingAndGlyphs" >0.</text>
<text x="168.5" y="1292.3999999999999" font-size="18" fill="#000" text-anchor="middle" font-weight="normal" textLength="8.84" lengthAdjust="spacingAndGlyphs" >1</text>
<text x="249.5" y="1292.3999999999999" font-size="18" fill="#000" text-anchor="middle" font-weight="normal" textLength="42.43" lengthAdjust="spacingAndGlyphs" >BASE</text>
<text x="484.1" y="1292.3999999999999" font-size="18" fill="#000" text-anchor="middle" font-weight="normal" textLength="13.25" lengthAdjust="spacingAndGlyphs" >0.</text>
<ellipse cx="373" cy="1252" rx="45.6" ry="24" fill="none" stroke="#E3212B" stroke-width="3.9"/>
<rect x="141" y="1356" width="1.5" height="72" fill="#ACA899" />
<rect x="142.5" y="1357.5" width="1.5" height="71" fill="#FFFFFF" />
<rect x="141" y="1356" width="382" height="1.5" fill="#ACA899" />
<rect x="142.5" y="1357.5" width="379" height="1.5" fill="#FFFFFF" />
<rect x="520.5" y="1356" width="1.5" height="72" fill="#ACA899" />
<rect x="522" y="1356" width="1.5" height="72" fill="#FFFFFF" />
<rect x="150" y="1350" width="161" height="12" fill="#ECE9D8" />
<text x="153.8" y="1363" font-size="18" fill="#000" text-anchor="start" font-weight="normal" textLength="153.5" lengthAdjust="spacingAndGlyphs" >Reset Selected Rows</text>
<text x="163.6" y="1405" font-size="18" fill="#000" text-anchor="start" font-weight="normal" textLength="46.4" lengthAdjust="spacingAndGlyphs" >Height</text>
<rect x="279.4" y="1383" width="130.3" height="27.5" fill="#FFFFFF" />
<rect x="279.4" y="1383" width="130.3" height="1.5" fill="#ACA899" />
<rect x="279.4" y="1383" width="1.5" height="27.5" fill="#ACA899" />
<rect x="280.9" y="1384.5" width="127.30000000000001" height="2" fill="#716F64" />
<rect x="280.9" y="1384.5" width="2" height="24.5" fill="#716F64" />
<rect x="408.2" y="1383" width="1.5" height="27.5" fill="#FFFFFF" />
<rect x="279.4" y="1409.0" width="130.3" height="1.5" fill="#FFFFFF" />
<rect x="406.7" y="1384.5" width="1.5" height="24.5" fill="#F1EFE2" />
<rect x="280.9" y="1407.5" width="127.30000000000001" height="1.5" fill="#F1EFE2" />
<rect x="282.9" y="1386.5" width="123.80000000000001" height="21.0" fill="#FFFFFF" />
<text x="283.8" y="1404" font-size="18" fill="#000" text-anchor="start" font-weight="normal" textLength="23" lengthAdjust="spacingAndGlyphs" >3.2</text>
<rect x="429" y="1382.6" width="74.69999999999999" height="28.90000000000009" fill="#ECE9D8" />
<rect x="429" y="1382.6" width="74.69999999999999" height="1.5" fill="#FFFFFF" />
<rect x="429" y="1382.6" width="1.5" height="28.90000000000009" fill="#FFFFFF" />
<rect x="502.2" y="1382.6" width="1.5" height="28.90000000000009" fill="#716F64" />
<rect x="429" y="1410.0" width="74.69999999999999" height="1.5" fill="#716F64" />
<rect x="500.7" y="1384.1" width="1.5" height="25.90000000000009" fill="#ACA899" />
<rect x="430.5" y="1408.5" width="71.69999999999999" height="1.5" fill="#ACA899" />
<text x="466.5" y="1404" font-size="18" fill="#000" text-anchor="middle" font-weight="normal" textLength="41.3" lengthAdjust="spacingAndGlyphs" >Reset</text>
<rect x="279.4" y="1424.6" width="130.3" height="25.40000000000009" fill="#FFFFFF" />
<rect x="279.4" y="1424.6" width="130.3" height="1.5" fill="#ACA899" />
<rect x="279.4" y="1424.6" width="1.5" height="25.40000000000009" fill="#ACA899" />
<rect x="280.9" y="1426.1" width="127.30000000000001" height="2" fill="#716F64" />
<rect x="280.9" y="1426.1" width="2" height="22.40000000000009" fill="#716F64" />
<rect x="408.2" y="1424.6" width="1.5" height="25.40000000000009" fill="#FFFFFF" />
<rect x="279.4" y="1448.5" width="130.3" height="1.5" fill="#FFFFFF" />
<rect x="406.7" y="1426.1" width="1.5" height="22.40000000000009" fill="#F1EFE2" />
<rect x="280.9" y="1447" width="127.30000000000001" height="1.5" fill="#F1EFE2" />
<rect x="282.9" y="1428.1" width="123.80000000000001" height="18.90000000000009" fill="#FFFFFF" />
<rect x="429" y="1424.6" width="74.69999999999999" height="27.40000000000009" fill="#ECE9D8" />
<rect x="429" y="1424.6" width="74.69999999999999" height="1.5" fill="#FFFFFF" />
<rect x="429" y="1424.6" width="1.5" height="27.40000000000009" fill="#FFFFFF" />
<rect x="502.2" y="1424.6" width="1.5" height="27.40000000000009" fill="#716F64" />
<rect x="429" y="1450.5" width="74.69999999999999" height="1.5" fill="#716F64" />
<rect x="500.7" y="1426.1" width="1.5" height="24.40000000000009" fill="#ACA899" />
<rect x="430.5" y="1449" width="71.69999999999999" height="1.5" fill="#ACA899" />
<rect x="536.6" y="1356" width="479.9" height="1.5" fill="#ACA899" />
<rect x="536.6" y="1356" width="1.5" height="68.79999999999995" fill="#ACA899" />
<rect x="538.1" y="1357.5" width="478.4" height="1.5" fill="#FFFFFF" />
<rect x="538.1" y="1357.5" width="1.5" height="67.29999999999995" fill="#FFFFFF" />
<rect x="1015" y="1356" width="1.5" height="68.79999999999995" fill="#ACA899" />
<rect x="536.6" y="1423.3" width="479.9" height="1.5" fill="#ACA899" />
<rect x="1016.5" y="1356" width="1.5" height="70.29999999999995" fill="#FFFFFF" />
<rect x="536.6" y="1424.8" width="481.4" height="1.5" fill="#FFFFFF" />
<rect x="546" y="1350" width="43" height="12" fill="#ECE9D8" />
<text x="549.7" y="1363" font-size="18" fill="#000" text-anchor="start" font-weight="normal" textLength="35.8" lengthAdjust="spacingAndGlyphs" >Units</text>
<text x="616" y="1398" font-size="18" fill="#000" text-anchor="start" font-weight="normal" textLength="96" lengthAdjust="spacingAndGlyphs" >Change Units</text>
<rect x="856" y="1377" width="131.5" height="30" fill="#FFFFFF" />
<rect x="856" y="1377" width="131.5" height="1.5" fill="#ACA899" />
<rect x="856" y="1377" width="1.5" height="30" fill="#ACA899" />
<rect x="857.5" y="1378.5" width="128.5" height="2" fill="#716F64" />
<rect x="857.5" y="1378.5" width="2" height="27" fill="#716F64" />
<rect x="986.0" y="1377" width="1.5" height="30" fill="#FFFFFF" />
<rect x="856" y="1405.5" width="131.5" height="1.5" fill="#FFFFFF" />
<rect x="984.5" y="1378.5" width="1.5" height="27" fill="#F1EFE2" />
<rect x="857.5" y="1404" width="128.5" height="1.5" fill="#F1EFE2" />
<rect x="859.5" y="1380.5" width="125.0" height="23.5" fill="#FFFFFF" />
<rect x="961.0" y="1380.5" width="23.5" height="24.0" fill="#ECE9D8" />
<rect x="961.0" y="1380.5" width="23.5" height="1.5" fill="#FFFFFF" />
<rect x="961.0" y="1380.5" width="1.5" height="24.0" fill="#FFFFFF" />
<rect x="983.0" y="1380.5" width="1.5" height="24.0" fill="#716F64" />
<rect x="961.0" y="1403.0" width="23.5" height="1.5" fill="#716F64" />
<rect x="981.5" y="1382.0" width="1.5" height="21.0" fill="#ACA899" />
<rect x="962.5" y="1401.5" width="20.5" height="1.5" fill="#ACA899" />
<path d="M 967.25 1389.5 L 978.25 1389.5 L 972.75 1395.5 Z" fill="#000"/>
<text x="863.4" y="1399" font-size="18" fill="#000" text-anchor="start" font-weight="normal" textLength="43.6" lengthAdjust="spacingAndGlyphs" >Ton-m</text>
<rect x="0" y="1428" width="1191" height="256" fill="#FFFFFF" />
<rect x="0" y="1684" width="1191" height="1" fill="#000000" />
</svg>
</body></html>
